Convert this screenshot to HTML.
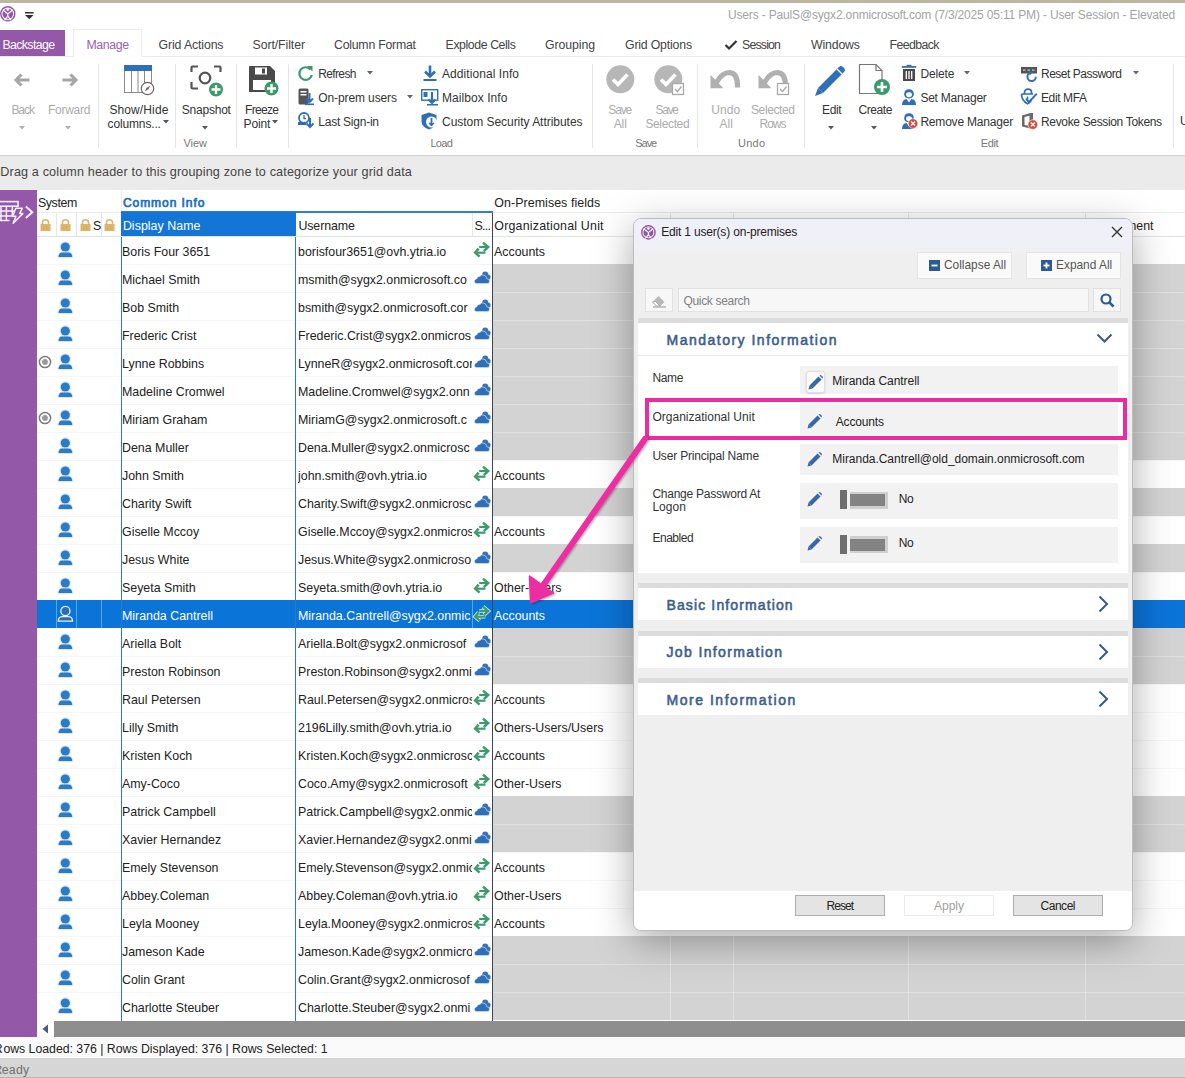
<!DOCTYPE html><html><head><meta charset="utf-8"><style>
html,body{margin:0;padding:0;width:1185px;height:1078px;overflow:hidden;background:#fff;position:relative}
.t{position:absolute;white-space:nowrap;font-family:"Liberation Sans",sans-serif}
.b{position:absolute;display:block}
svg.b{overflow:visible}
</style></head><body>
<div class="b" style="left:0px;top:0px;width:1185px;height:2.5px;background:#bdb7a1"></div>
<div class="b" style="left:0px;top:3px;width:1185px;height:27px;background:#fff"></div>
<svg class="b" style="left:0px;top:6px" width="16.0" height="16.0" viewBox="0 0 16 16"><circle cx="7.8" cy="7.8" r="7" fill="#fff" stroke="#9458a8" stroke-width="1.5"/><circle cx="7.8" cy="7.8" r="5.3" fill="#9458a8"/><path d="M2.8 3.8 L7.8 8 L12.8 3.8 M7.8 8 V10 L4.6 14.2 M7.8 10 L11 14.2" stroke="#fff" stroke-width="1.2" fill="none"/><circle cx="7.8" cy="3.6" r="1.3" fill="#fff"/></svg>
<svg class="b" style="left:25px;top:12px" width="9" height="8" viewBox="0 0 9 8"><rect x="0" y="0" width="8.6" height="1.5" fill="#333"/><path d="M0 3 L8.6 3 L4.3 7.2 Z" fill="#333"/></svg>
<div class="t" style="left:728.00px;top:7.0px;font-size:12.0px;line-height:16px;color:#a3a3a3;font-weight:normal;letter-spacing:-0.163px;">Users - PaulS@sygx2.onmicrosoft.com (7/3/2025 05:11 PM) - User Session - Elevated</div>
<div class="b" style="left:0px;top:30px;width:1185px;height:27px;background:#fff"></div>
<div class="b" style="left:0px;top:56px;width:1185px;height:1px;background:#ececec"></div>
<div class="b" style="left:0px;top:30px;width:65px;height:26px;background:#9458a8"></div>
<div class="t" style="left:2.50px;top:37.0px;font-size:12.3px;line-height:16px;color:#fff;font-weight:normal;letter-spacing:-0.618px;">Backstage</div>
<div class="b" style="left:73px;top:29px;width:69px;height:28px;background:#fff;border:1px solid #ececec;border-bottom:none;box-sizing:border-box"></div>
<div class="t" style="left:86.40px;top:37.0px;font-size:12.3px;line-height:16px;color:#9b62b0;font-weight:normal;letter-spacing:-0.341px;">Manage</div>
<div class="t" style="left:158.60px;top:37.0px;font-size:12.3px;line-height:16px;color:#444;font-weight:normal;letter-spacing:-0.127px;">Grid Actions</div>
<div class="t" style="left:252.50px;top:37.0px;font-size:12.3px;line-height:16px;color:#444;font-weight:normal;letter-spacing:-0.076px;">Sort/Filter</div>
<div class="t" style="left:334.00px;top:37.0px;font-size:12.3px;line-height:16px;color:#444;font-weight:normal;letter-spacing:-0.229px;">Column Format</div>
<div class="t" style="left:445.60px;top:37.0px;font-size:12.3px;line-height:16px;color:#444;font-weight:normal;letter-spacing:-0.413px;">Explode Cells</div>
<div class="t" style="left:545.00px;top:37.0px;font-size:12.3px;line-height:16px;color:#444;font-weight:normal;letter-spacing:-0.079px;">Grouping</div>
<div class="t" style="left:625.00px;top:37.0px;font-size:12.3px;line-height:16px;color:#444;font-weight:normal;letter-spacing:-0.182px;">Grid Options</div>
<div class="t" style="left:742.00px;top:37.0px;font-size:12.3px;line-height:16px;color:#444;font-weight:normal;letter-spacing:-0.798px;">Session</div>
<div class="t" style="left:811.00px;top:37.0px;font-size:12.3px;line-height:16px;color:#444;font-weight:normal;letter-spacing:-0.156px;">Windows</div>
<div class="t" style="left:889.60px;top:37.0px;font-size:12.3px;line-height:16px;color:#444;font-weight:normal;letter-spacing:-0.589px;">Feedback</div>
<svg class="b" style="left:724px;top:39px" width="14" height="12" viewBox="0 0 14 12"><path d="M1.5 6 L5 9.5 L12.5 2" stroke="#333" stroke-width="2.2" fill="none"/></svg>
<div class="b" style="left:0px;top:57px;width:1185px;height:98px;background:#fff"></div>
<div class="b" style="left:0px;top:155px;width:1185px;height:1px;background:#d2d2d2"></div>
<div class="b" style="left:98px;top:64px;width:1px;height:84px;background:#e6e6e6"></div>
<div class="b" style="left:175px;top:64px;width:1px;height:84px;background:#e6e6e6"></div>
<div class="b" style="left:236px;top:64px;width:1px;height:84px;background:#e6e6e6"></div>
<div class="b" style="left:288px;top:64px;width:1px;height:84px;background:#e6e6e6"></div>
<div class="b" style="left:592px;top:64px;width:1px;height:84px;background:#e6e6e6"></div>
<div class="b" style="left:697px;top:64px;width:1px;height:84px;background:#e6e6e6"></div>
<div class="b" style="left:804px;top:64px;width:1px;height:84px;background:#e6e6e6"></div>
<div class="b" style="left:1173px;top:64px;width:1px;height:84px;background:#e6e6e6"></div>
<svg class="b" style="left:13px;top:73px" width="18" height="14" viewBox="0 0 18 14"><path d="M16.5 7 L3 7 M8.5 1.5 L3 7 L8.5 12.5" stroke="#a6a6a6" stroke-width="3" fill="none" stroke-linejoin="miter"/></svg>
<svg class="b" style="left:61px;top:73px" width="18" height="14" viewBox="0 0 18 14"><path d="M1.5 7 L15 7 M9.5 1.5 L15 7 L9.5 12.5" stroke="#a6a6a6" stroke-width="3" fill="none"/></svg>
<div class="t" style="left:11.40px;top:102.0px;font-size:12.0px;line-height:16px;color:#ababab;font-weight:normal;letter-spacing:-1.053px;">Back</div>
<div class="t" style="left:48.00px;top:102.0px;font-size:12.0px;line-height:16px;color:#ababab;font-weight:normal;letter-spacing:-0.273px;">Forward</div>
<svg class="b" style="left:19px;top:126px" width="6" height="4" viewBox="0 0 6 4"><path d="M0 0 L6 0 L3 3.5 Z" fill="#b0b0b0"/></svg>
<svg class="b" style="left:65px;top:126px" width="6" height="4" viewBox="0 0 6 4"><path d="M0 0 L6 0 L3 3.5 Z" fill="#b0b0b0"/></svg>
<svg class="b" style="left:124px;top:65px" width="31" height="30" viewBox="0 0 31 30"><rect x="0.5" y="0.5" width="27" height="27" fill="#fff" stroke="#8a8a8a"/><rect x="0" y="0" width="28" height="6" fill="#2f6fba"/><path d="M7.5 6 V28 M14 6 V28 M20.5 6 V28" stroke="#8a8a8a"/><circle cx="23.5" cy="23.5" r="6.2" fill="#fff" stroke="#666" stroke-width="1.2"/><path d="M21 26 L23 22.5 L26.5 20.5 L24.5 24 Z" fill="#e0502a"/><path d="M21 26 L24.5 24 L23 22.5Z" fill="#2f6fba"/></svg>
<div class="t" style="left:109.40px;top:102.0px;font-size:12.0px;line-height:16px;color:#333;font-weight:normal;letter-spacing:0.115px;">Show/Hide</div>
<div class="t" style="left:107.60px;top:116.0px;font-size:12.0px;line-height:16px;color:#333;font-weight:normal;letter-spacing:-0.147px;">columns...</div>
<svg class="b" style="left:163px;top:120px" width="6" height="4" viewBox="0 0 6 4"><path d="M0 0 L6 0 L3 3.5 Z" fill="#555"/></svg>
<svg class="b" style="left:190px;top:65px" width="33" height="32" viewBox="0 0 33 32"><path d="M1.5 7 V2.5 Q1.5 1.5 2.5 1.5 H8 M24 1.5 H29.5 Q30.5 1.5 30.5 2.5 V7 M1.5 17 V22.5 Q1.5 23.5 2.5 23.5 H8" stroke="#555" stroke-width="2.2" fill="none"/><circle cx="15" cy="13" r="5.3" fill="none" stroke="#555" stroke-width="2.2"/><circle cx="26" cy="24.5" r="7" fill="#3b9a6c"/><path d="M26 20 V29 M21.5 24.5 H30.5" stroke="#fff" stroke-width="2.4"/></svg>
<div class="t" style="left:181.80px;top:102.0px;font-size:12.0px;line-height:16px;color:#333;font-weight:normal;letter-spacing:-0.223px;">Snapshot</div>
<svg class="b" style="left:202px;top:126px" width="6" height="4" viewBox="0 0 6 4"><path d="M0 0 L6 0 L3 3.5 Z" fill="#555"/></svg>
<svg class="b" style="left:248px;top:65px" width="32" height="31" viewBox="0 0 32 31"><path d="M1 2 Q1 1 2 1 H22 L27 6 V27 H1 Z" fill="#4a4a4a"/><rect x="7" y="2.5" width="12" height="7" fill="#fff"/><rect x="14" y="3.5" width="3" height="5" fill="#4a4a4a"/><rect x="5" y="15" width="18" height="10" fill="#fff"/><circle cx="23.5" cy="23.5" r="7" fill="#3b9a6c"/><path d="M23.5 19 V28 M19 23.5 H28" stroke="#fff" stroke-width="2.4"/></svg>
<div class="t" style="left:245.00px;top:102.0px;font-size:12.0px;line-height:16px;color:#333;font-weight:normal;letter-spacing:-0.664px;">Freeze</div>
<div class="t" style="left:243.50px;top:116.0px;font-size:12.0px;line-height:16px;color:#333;font-weight:normal;letter-spacing:-0.115px;">Point</div>
<svg class="b" style="left:272px;top:120px" width="6" height="4" viewBox="0 0 6 4"><path d="M0 0 L6 0 L3 3.5 Z" fill="#555"/></svg>
<div class="t" style="left:183.50px;top:135.5px;font-size:11.0px;line-height:14px;color:#777;font-weight:normal;letter-spacing:-0.087px;">View</div>
<svg class="b" style="left:297px;top:65px" width="17" height="17" viewBox="0 0 17 17"><path d="M13.5 4.5 A6.3 6.3 0 1 0 14.8 10" stroke="#3b9a6c" stroke-width="2.2" fill="none"/><path d="M10 1 L15.5 1 L15.5 6.5 Z" fill="#3b9a6c"/></svg>
<div class="t" style="left:318.30px;top:66.0px;font-size:12.0px;line-height:16px;color:#333;font-weight:normal;letter-spacing:-0.650px;">Refresh</div>
<svg class="b" style="left:367px;top:71px" width="6" height="4" viewBox="0 0 6 4"><path d="M0 0 L6 0 L3 3.5 Z" fill="#666"/></svg>
<svg class="b" style="left:298px;top:88px" width="17" height="18" viewBox="0 0 17 18"><rect x="0.5" y="0.5" width="10" height="16" rx="1.5" fill="#555"/><rect x="2.5" y="3" width="6" height="1.5" fill="#fff"/><rect x="2.5" y="6" width="6" height="1.5" fill="#fff"/><path d="M11.5 5 V14 M8 10.5 L11.5 14 L15 10.5" stroke="#2f6fba" stroke-width="2" fill="none"/><rect x="7" y="15.5" width="9" height="1.6" fill="#2f6fba"/></svg>
<div class="t" style="left:318.30px;top:90.0px;font-size:12.0px;line-height:16px;color:#333;font-weight:normal;letter-spacing:-0.112px;">On-prem users</div>
<svg class="b" style="left:407px;top:95px" width="6" height="4" viewBox="0 0 6 4"><path d="M0 0 L6 0 L3 3.5 Z" fill="#666"/></svg>
<svg class="b" style="left:298px;top:112px" width="17" height="17" viewBox="0 0 17 17"><circle cx="6" cy="6" r="5" fill="#fff" stroke="#2f6fba" stroke-width="1.8"/><path d="M6 3 V6.5 H8" stroke="#2f6fba" stroke-width="1.3" fill="none"/><rect x="0" y="10" width="8" height="3" fill="#2f6fba"/><path d="M12 6 V15 M8.5 11.5 L12 15 L15.5 11.5" stroke="#2f6fba" stroke-width="2" fill="none"/></svg>
<div class="t" style="left:318.30px;top:113.5px;font-size:12.0px;line-height:16px;color:#333;font-weight:normal;letter-spacing:-0.242px;">Last Sign-in</div>
<svg class="b" style="left:422px;top:65px" width="16" height="17" viewBox="0 0 16 17"><path d="M8 0.5 V11 M3 6.5 L8 11.5 L13 6.5" stroke="#2f6fba" stroke-width="2.6" fill="none"/><rect x="1.5" y="14" width="13" height="2" fill="#2f6fba"/></svg>
<div class="t" style="left:442.00px;top:66.0px;font-size:12.0px;line-height:16px;color:#333;font-weight:normal;letter-spacing:0.066px;">Additional Info</div>
<svg class="b" style="left:421px;top:89px" width="18" height="17" viewBox="0 0 18 17"><rect x="0.7" y="0.7" width="16" height="10.5" fill="none" stroke="#2f6fba" stroke-width="1.4"/><rect x="2.5" y="3" width="4" height="5" fill="#2f6fba"/><path d="M11 3 V14 M7.5 10.5 L11 14 L14.5 10.5" stroke="#2f6fba" stroke-width="2.2" fill="none"/><rect x="6" y="15" width="11" height="1.5" fill="#2f6fba"/></svg>
<div class="t" style="left:442.00px;top:90.0px;font-size:12.0px;line-height:16px;color:#333;font-weight:normal;letter-spacing:0.065px;">Mailbox Info</div>
<svg class="b" style="left:421px;top:112px" width="18" height="18" viewBox="0 0 18 18"><path d="M8 0.5 L15.5 3 V9 Q15.5 15 8 17.5 Q0.5 15 0.5 9 V3 Z" fill="#2f6fba"/><circle cx="10.5" cy="10" r="5.5" fill="#fff"/><path d="M10.5 6 V13 M8.3 11 L10.5 13.3 L12.7 11" stroke="#2f6fba" stroke-width="1.8" fill="none"/></svg>
<div class="t" style="left:442.00px;top:113.5px;font-size:12.0px;line-height:16px;color:#333;font-weight:normal;letter-spacing:-0.034px;">Custom Security Attributes</div>
<div class="t" style="left:430.40px;top:135.5px;font-size:11.0px;line-height:14px;color:#777;font-weight:normal;letter-spacing:-0.673px;">Load</div>
<svg class="b" style="left:606px;top:65px" width="29" height="29" viewBox="0 0 29 29"><circle cx="14.3" cy="14.3" r="14" fill="#b7b7b7"/><path d="M7 14.5 L12 19.5 L21.5 9.5" stroke="#fff" stroke-width="3.6" fill="none"/></svg>
<div class="t" style="left:608.30px;top:102.0px;font-size:12.0px;line-height:16px;color:#ababab;font-weight:normal;letter-spacing:-1.153px;">Save</div>
<div class="t" style="left:613.70px;top:116.0px;font-size:12.0px;line-height:16px;color:#ababab;font-weight:normal;letter-spacing:-0.110px;">All</div>
<svg class="b" style="left:654px;top:65px" width="31" height="31" viewBox="0 0 31 31"><circle cx="14.3" cy="14.3" r="14" fill="#b7b7b7"/><path d="M7 14.5 L12 19.5 L21.5 9.5" stroke="#fff" stroke-width="3.6" fill="none"/><rect x="18.5" y="18.5" width="11" height="11" fill="#fff" stroke="#a8a8a8" stroke-width="1.3"/><path d="M21 24 L23.5 26.5 L27.5 21.5" stroke="#a8a8a8" stroke-width="1.3" fill="none"/></svg>
<div class="t" style="left:655.60px;top:102.0px;font-size:12.0px;line-height:16px;color:#ababab;font-weight:normal;letter-spacing:-1.320px;">Save</div>
<div class="t" style="left:645.40px;top:116.0px;font-size:12.0px;line-height:16px;color:#ababab;font-weight:normal;letter-spacing:-0.354px;">Selected</div>
<div class="t" style="left:635.30px;top:135.5px;font-size:11.0px;line-height:14px;color:#777;font-weight:normal;letter-spacing:-1.060px;">Save</div>
<svg class="b" style="left:709px;top:67px" width="33" height="25" viewBox="0 0 33 25"><path d="M7.5 15.5 Q13 5.5 20.5 5.5 Q29 6 28.5 20.5" stroke="#b0b0b0" stroke-width="5.2" fill="none"/><path d="M1.5 8 L1.5 21.2 L14.5 21.2 Z" fill="#b0b0b0"/></svg>
<div class="t" style="left:711.20px;top:102.0px;font-size:12.0px;line-height:16px;color:#ababab;font-weight:normal;letter-spacing:0.140px;">Undo</div>
<div class="t" style="left:719.50px;top:116.0px;font-size:12.0px;line-height:16px;color:#ababab;font-weight:normal;letter-spacing:0.090px;">All</div>
<svg class="b" style="left:757px;top:67px" width="35" height="29" viewBox="0 0 35 29"><path d="M7.5 15.5 Q13 5.5 20.5 5.5 Q29 6 28.5 20.5" stroke="#b0b0b0" stroke-width="5.2" fill="none"/><path d="M1.5 8 L1.5 21.2 L14.5 21.2 Z" fill="#b0b0b0"/><rect x="20.5" y="16.5" width="11" height="11" fill="#fff" stroke="#a8a8a8" stroke-width="1.3"/><path d="M23 22 L25.5 24.5 L29.5 19.5" stroke="#a8a8a8" stroke-width="1.3" fill="none"/></svg>
<div class="t" style="left:751.00px;top:102.0px;font-size:12.0px;line-height:16px;color:#ababab;font-weight:normal;letter-spacing:-0.383px;">Selected</div>
<div class="t" style="left:759.50px;top:116.0px;font-size:12.0px;line-height:16px;color:#ababab;font-weight:normal;letter-spacing:-1.000px;">Rows</div>
<div class="t" style="left:738.00px;top:135.5px;font-size:11.0px;line-height:14px;color:#777;font-weight:normal;letter-spacing:0.237px;">Undo</div>
<svg class="b" style="left:814px;top:63px" width="34" height="34" viewBox="0 0 34 34"><path d="M4 25 L25 4 Q27 2 29 4 L30 5 Q32 7 30 9 L9 30 Z" fill="#2f6fba"/><path d="M4 25 L9 30 L1 33 Z" fill="#2f6fba"/><path d="M23 6 L28 11" stroke="#fff" stroke-width="1.2"/></svg>
<div class="t" style="left:822.00px;top:102.0px;font-size:12.0px;line-height:16px;color:#333;font-weight:normal;letter-spacing:-0.353px;">Edit</div>
<svg class="b" style="left:828px;top:126px" width="6" height="4" viewBox="0 0 6 4"><path d="M0 0 L6 0 L3 3.5 Z" fill="#555"/></svg>
<svg class="b" style="left:858px;top:63px" width="34" height="34" viewBox="0 0 34 34"><path d="M1.5 1.5 H18 L24 7.5 V30.5 H1.5 Z" fill="#fff" stroke="#777" stroke-width="1.2"/><path d="M18 1.5 V7.5 H24" fill="none" stroke="#777" stroke-width="1.2"/><circle cx="24" cy="24" r="8" fill="#3b9a6c"/><path d="M24 19 V29 M19 24 H29" stroke="#fff" stroke-width="2.6"/></svg>
<div class="t" style="left:858.60px;top:102.0px;font-size:12.0px;line-height:16px;color:#333;font-weight:normal;letter-spacing:-0.460px;">Create</div>
<svg class="b" style="left:871px;top:126px" width="6" height="4" viewBox="0 0 6 4"><path d="M0 0 L6 0 L3 3.5 Z" fill="#555"/></svg>
<svg class="b" style="left:901px;top:64px" width="16" height="18" viewBox="0 0 16 18"><rect x="0.8" y="2" width="14.4" height="1.8" fill="#3f6fae"/><rect x="5.5" y="0.8" width="5" height="1.5" fill="#3f6fae"/><rect x="2" y="5" width="12" height="12" fill="#4a4a4a"/><path d="M5.3 7 V15 M8 7 V15 M10.7 7 V15" stroke="#fff" stroke-width="1.3"/></svg>
<div class="t" style="left:920.40px;top:66.0px;font-size:12.0px;line-height:16px;color:#333;font-weight:normal;letter-spacing:-0.116px;">Delete</div>
<svg class="b" style="left:964px;top:71px" width="6" height="4" viewBox="0 0 6 4"><path d="M0 0 L6 0 L3 3.5 Z" fill="#666"/></svg>
<svg class="b" style="left:901px;top:88px" width="17" height="18" viewBox="0 0 17 18"><path d="M3.2 6.2 Q3.2 1.2 8 1.2 Q12.8 1.2 12.8 6.2 Q12.8 10.2 8 10.4 Q3.2 10.2 3.2 6.2 Z" fill="#2f6fba"/><path d="M5 6.6 Q5 4 8 4.3 Q11 4 11 6.6 Q10.8 9.2 8 9.3 Q5.2 9.2 5 6.6 Z" fill="#fff"/><path d="M1 17 Q1 11.5 5.5 11 L8 14.5 L10.5 11 Q15 11.5 15 17 Z" fill="#2f6fba"/><path d="M7 11.2 L8 14 L9 11.2 Z" fill="#cfe2f6"/></svg>
<div class="t" style="left:920.40px;top:90.0px;font-size:12.0px;line-height:16px;color:#333;font-weight:normal;letter-spacing:-0.226px;">Set Manager</div>
<svg class="b" style="left:901px;top:112px" width="19" height="18" viewBox="0 0 19 18"><path d="M3.2 6.2 Q3.2 1.2 8 1.2 Q12.8 1.2 12.8 6.2 Q12.8 10.2 8 10.4 Q3.2 10.2 3.2 6.2 Z" fill="#2f6fba"/><path d="M5 6.6 Q5 4 8 4.3 Q11 4 11 6.6 Q10.8 9.2 8 9.3 Q5.2 9.2 5 6.6 Z" fill="#fff"/><path d="M1 17 Q1 11.5 5.5 11 L8 14.5 L10.5 11 Q13 11.3 14 13 L12 17 Z" fill="#2f6fba"/><circle cx="12" cy="11.6" r="4.8" fill="#d9443a" stroke="#fff" stroke-width="0.6"/><path d="M10 9.6 L14 13.6 M14 9.6 L10 13.6" stroke="#fff" stroke-width="1.4"/></svg>
<div class="t" style="left:920.40px;top:113.5px;font-size:12.0px;line-height:16px;color:#333;font-weight:normal;letter-spacing:-0.200px;">Remove Manager</div>
<svg class="b" style="left:1020px;top:65px" width="18" height="18" viewBox="0 0 18 18"><rect x="1" y="2" width="16" height="6.5" fill="#555"/><path d="M3 5.2 H5.5 M7.5 5.2 H10 M12 5.2 H14.5" stroke="#c8c8c8" stroke-width="1.2"/><path d="M15.8 11.8 A4.2 4.2 0 1 1 11.6 7.6" stroke="#2f6fba" stroke-width="2" fill="none"/><path d="M8.6 6 L12.6 7.6 L9.6 10.4 Z" fill="#2f6fba"/></svg>
<div class="t" style="left:1041.00px;top:66.0px;font-size:12.0px;line-height:16px;color:#333;font-weight:normal;letter-spacing:-0.497px;">Reset Password</div>
<svg class="b" style="left:1133px;top:71px" width="6" height="4" viewBox="0 0 6 4"><path d="M0 0 L6 0 L3 3.5 Z" fill="#666"/></svg>
<svg class="b" style="left:1020px;top:88px" width="18" height="17" viewBox="0 0 18 17"><path d="M4.5 6 V4.5 Q4.5 1.2 8 1.2 Q11.5 1.2 11.5 4.5 V6" stroke="#2f6fba" stroke-width="1.7" fill="none"/><path d="M1.5 6 H13 M1.5 6 Q1.5 12.5 7.5 15.8 Q10 14.5 11.5 12" stroke="#2f6fba" stroke-width="1.7" fill="none"/><rect x="6.8" y="8.5" width="1.5" height="3" fill="#2f6fba"/><path d="M6 10.5 L8.8 14.2 L16.8 5.6" stroke="#2f6fba" stroke-width="2" fill="none"/></svg>
<div class="t" style="left:1041.00px;top:90.0px;font-size:12.0px;line-height:16px;color:#333;font-weight:normal;letter-spacing:-0.389px;">Edit MFA</div>
<svg class="b" style="left:1020px;top:112px" width="19" height="18" viewBox="0 0 19 18"><path d="M2 3.5 L10.5 1 H13 V14 L10.5 16.5 L2 14.5 Z" fill="#6a6a6a"/><path d="M4.5 5 L9.5 3.8 V13.8 L4.5 13 Z" fill="#fff"/><circle cx="12.8" cy="12.6" r="4.8" fill="#d9443a" stroke="#fff" stroke-width="0.6"/><path d="M10.8 10.6 L14.8 14.6 M14.8 10.6 L10.8 14.6" stroke="#fff" stroke-width="1.4"/></svg>
<div class="t" style="left:1041.00px;top:113.5px;font-size:12.0px;line-height:16px;color:#333;font-weight:normal;letter-spacing:-0.340px;">Revoke Session Tokens</div>
<div class="t" style="left:980.80px;top:135.5px;font-size:11.0px;line-height:14px;color:#777;font-weight:normal;letter-spacing:-0.377px;">Edit</div>
<div class="t" style="left:1180px;top:113.0px;font-size:12.0px;line-height:16px;color:#333;font-weight:normal;">U</div>
<div class="b" style="left:0px;top:156px;width:1185px;height:34px;background:#ebebeb"></div>
<div class="t" style="left:0.30px;top:163.5px;font-size:12.6px;line-height:16px;color:#444;font-weight:normal;letter-spacing:0.148px;">Drag a column header to this grouping zone to categorize your grid data</div>
<div class="b" style="left:0px;top:190px;width:37px;height:847px;background:#9458a8"></div>
<svg class="b" style="left:0px;top:200px" width="36" height="25" viewBox="0 0 36 25"><g stroke="#fbefff" fill="none"><rect x="-1" y="1.6" width="19" height="4.6" stroke-width="1.6"/><path d="M0 11 H14 M0 16 H12 M0 20.6 H9.5" stroke-width="1.5"/><path d="M1 6 V20 M6.4 6 V20 M12.3 6 V16" stroke-width="1.5"/></g><path d="M15.8 8.2 H22.3 L19.6 13.6 H22.8 L13.2 23.2 L15.9 16.3 H12.6 Z" fill="#9458a8" stroke="#fbefff" stroke-width="1.5" stroke-linejoin="round"/><path d="M25.8 6.5 L32.3 12.2 L25.8 17.9" stroke="#fbefff" stroke-width="2" fill="none"/></svg>
<div class="b" style="left:37px;top:190px;width:1148px;height:831px;background:#fff"></div>
<div class="t" style="left:38.00px;top:194.6px;font-size:12.4px;line-height:16px;color:#222;font-weight:normal;letter-spacing:-0.418px;">System</div>
<div class="t" style="left:122.90px;top:195.0px;font-size:12.0px;line-height:16px;color:#1a70c2;font-weight:normal;letter-spacing:0.950px;-webkit-text-stroke:0.7px #1a70c2">Common Info</div>
<div class="b" style="left:37px;top:212px;width:1148px;height:1px;background:#ececec"></div>
<div class="b" style="left:121px;top:190px;width:1px;height:22px;background:#eeeeee"></div>
<div class="b" style="left:121px;top:211px;width:372px;height:2px;background:#2b80cf"></div>
<div class="t" style="left:494.30px;top:194.8px;font-size:12.4px;line-height:16px;color:#222;font-weight:normal;letter-spacing:0.072px;">On-Premises fields</div>
<div class="b" style="left:37px;top:236px;width:1148px;height:1px;background:#e3e3e3"></div>
<div class="b" style="left:56px;top:213px;width:1px;height:23px;background:#e6e6e6"></div>
<div class="b" style="left:76px;top:213px;width:1px;height:23px;background:#e6e6e6"></div>
<div class="b" style="left:101px;top:213px;width:1px;height:23px;background:#e6e6e6"></div>
<svg class="b" style="left:40px;top:219px" width="11" height="12" viewBox="0 0 11 12"><path d="M2.5 5 V3.5 Q2.5 0.8 5.5 0.8 Q8.5 0.8 8.5 3.5 V5" stroke="#dcb56a" stroke-width="1.6" fill="none"/><rect x="0.5" y="5" width="10" height="7" fill="#dcb56a"/><path d="M3 8 H4 M6 8 H7 M3 10 H4 M6 10 H7" stroke="#c99c4e" stroke-width="0.8"/></svg>
<svg class="b" style="left:60px;top:219px" width="11" height="12" viewBox="0 0 11 12"><path d="M2.5 5 V3.5 Q2.5 0.8 5.5 0.8 Q8.5 0.8 8.5 3.5 V5" stroke="#dcb56a" stroke-width="1.6" fill="none"/><rect x="0.5" y="5" width="10" height="7" fill="#dcb56a"/><path d="M3 8 H4 M6 8 H7 M3 10 H4 M6 10 H7" stroke="#c99c4e" stroke-width="0.8"/></svg>
<svg class="b" style="left:80px;top:219px" width="11" height="12" viewBox="0 0 11 12"><path d="M2.5 5 V3.5 Q2.5 0.8 5.5 0.8 Q8.5 0.8 8.5 3.5 V5" stroke="#dcb56a" stroke-width="1.6" fill="none"/><rect x="0.5" y="5" width="10" height="7" fill="#dcb56a"/><path d="M3 8 H4 M6 8 H7 M3 10 H4 M6 10 H7" stroke="#c99c4e" stroke-width="0.8"/></svg>
<svg class="b" style="left:104px;top:219px" width="11" height="12" viewBox="0 0 11 12"><path d="M2.5 5 V3.5 Q2.5 0.8 5.5 0.8 Q8.5 0.8 8.5 3.5 V5" stroke="#dcb56a" stroke-width="1.6" fill="none"/><rect x="0.5" y="5" width="10" height="7" fill="#dcb56a"/><path d="M3 8 H4 M6 8 H7 M3 10 H4 M6 10 H7" stroke="#c99c4e" stroke-width="0.8"/></svg>
<div class="t" style="left:93px;top:218.0px;font-size:12.4px;line-height:16px;color:#222;font-weight:normal;">S</div>
<div class="b" style="left:121px;top:212px;width:175px;height:24px;background:#1375d5"></div>
<div class="t" style="left:122.90px;top:218.2px;font-size:12.4px;line-height:16px;color:#fff;font-weight:normal;letter-spacing:0.034px;">Display Name</div>
<div class="t" style="left:298.40px;top:218.2px;font-size:12.4px;line-height:16px;color:#222;font-weight:normal;letter-spacing:-0.081px;">Username</div>
<div class="b" style="left:472px;top:213px;width:1px;height:23px;background:#e6e6e6"></div>
<div class="t" style="left:474.50px;top:218.2px;font-size:12.4px;line-height:16px;color:#222;font-weight:normal;letter-spacing:-0.700px;">S...</div>
<div class="b" style="left:492px;top:213px;width:1px;height:23px;background:#e6e6e6"></div>
<div class="t" style="left:494.30px;top:218.2px;font-size:12.4px;line-height:16px;color:#222;font-weight:normal;letter-spacing:0.215px;">Organizational Unit</div>
<div class="b" style="left:670px;top:213px;width:1px;height:23px;background:#e6e6e6"></div>
<div class="b" style="left:733px;top:213px;width:1px;height:23px;background:#e6e6e6"></div>
<div class="b" style="left:908px;top:213px;width:1px;height:23px;background:#e6e6e6"></div>
<div class="b" style="left:1085px;top:213px;width:1px;height:23px;background:#e6e6e6"></div>
<div class="t" style="left:1126px;top:218.2px;font-size:12.4px;line-height:16px;color:#222;font-weight:normal;">ment</div>
<svg class="b" style="left:57px;top:240px" width="17" height="18" viewBox="0 0 17 18"><circle cx="8.3" cy="7.1" r="5.4" fill="#e6f0f9" stroke="#c9d6e2" stroke-width="0.5"/><circle cx="8.3" cy="7" r="4.6" fill="#2b7bc6"/><path d="M0.8 17.5 Q0.8 12.6 4.5 12.2 H12.2 Q15.9 12.6 15.9 17.5 Z" fill="#e6f0f9" stroke="#c9d6e2" stroke-width="0.5"/><path d="M1.6 16.9 Q1.6 12.6 5 12.4 H11.6 Q15.1 12.6 15.2 16.9 Z" fill="#2b7bc6"/></svg>
<div class="t" style="left:122px;top:243.8px;font-size:12.4px;line-height:16px;color:#222;font-weight:normal;">Boris Four 3651</div>
<div class="t" style="left:298px;top:243.8px;width:174px;overflow:hidden;font-size:12.4px;line-height:16px;color:#222">borisfour3651@ovh.ytria.io</div>
<svg class="b" style="left:474px;top:241px" width="17" height="17" viewBox="0 0 17 17"><path d="M5.2 6 H13.5" stroke="#3e9a6f" stroke-width="2.2" fill="none"/><path d="M9 1.8 L14.2 6 L9.8 10.2" stroke="#3e9a6f" stroke-width="2.5" fill="none"/><path d="M11.4 11.7 H2.2" stroke="#3e9a6f" stroke-width="2.2" fill="none"/><path d="M4.6 7.6 L1.2 11.6 L5.6 15.6" stroke="#3e9a6f" stroke-width="2.5" fill="none"/></svg>
<div class="t" style="left:494px;top:243.8px;font-size:12.4px;line-height:16px;color:#222;font-weight:normal;">Accounts</div>
<div class="b" style="left:493px;top:264px;width:692px;height:28px;background:#d3d3d3"></div>
<div class="b" style="left:37px;top:264px;width:456px;height:1px;background:#f5f5f5"></div>
<svg class="b" style="left:57px;top:268px" width="17" height="18" viewBox="0 0 17 18"><circle cx="8.3" cy="7.1" r="5.4" fill="#e6f0f9" stroke="#c9d6e2" stroke-width="0.5"/><circle cx="8.3" cy="7" r="4.6" fill="#2b7bc6"/><path d="M0.8 17.5 Q0.8 12.6 4.5 12.2 H12.2 Q15.9 12.6 15.9 17.5 Z" fill="#e6f0f9" stroke="#c9d6e2" stroke-width="0.5"/><path d="M1.6 16.9 Q1.6 12.6 5 12.4 H11.6 Q15.1 12.6 15.2 16.9 Z" fill="#2b7bc6"/></svg>
<div class="t" style="left:122px;top:271.8px;font-size:12.4px;line-height:16px;color:#222;font-weight:normal;">Michael Smith</div>
<div class="t" style="left:298px;top:271.8px;width:174px;overflow:hidden;font-size:12.4px;line-height:16px;color:#222">msmith@sygx2.onmicrosoft.co</div>
<svg class="b" style="left:474px;top:271px" width="17" height="14" viewBox="0 0 17 14"><g fill="#3a72b8"><circle cx="11.2" cy="3.6" r="3"/><circle cx="14" cy="6" r="2.6"/><rect x="9" y="4" width="6.5" height="5" rx="2"/></g><g fill="#2f6fba" stroke="#cfe0f2" stroke-width="0.7"><path d="M2.5 12.6 Q0.2 12.6 0.4 10.2 Q0.6 8 2.8 7.8 Q3.4 5.2 6.2 5.2 Q7.6 3.2 10 4.2 Q12.6 5 12.6 7.6 Q15.6 7.8 15.6 10.4 Q15.4 12.6 13 12.6 Z"/></g></svg>
<div class="b" style="left:493px;top:292px;width:692px;height:28px;background:#d3d3d3"></div>
<div class="b" style="left:493px;top:292px;width:692px;height:1px;background:#e0e0e0"></div>
<div class="b" style="left:37px;top:292px;width:456px;height:1px;background:#f5f5f5"></div>
<svg class="b" style="left:57px;top:296px" width="17" height="18" viewBox="0 0 17 18"><circle cx="8.3" cy="7.1" r="5.4" fill="#e6f0f9" stroke="#c9d6e2" stroke-width="0.5"/><circle cx="8.3" cy="7" r="4.6" fill="#2b7bc6"/><path d="M0.8 17.5 Q0.8 12.6 4.5 12.2 H12.2 Q15.9 12.6 15.9 17.5 Z" fill="#e6f0f9" stroke="#c9d6e2" stroke-width="0.5"/><path d="M1.6 16.9 Q1.6 12.6 5 12.4 H11.6 Q15.1 12.6 15.2 16.9 Z" fill="#2b7bc6"/></svg>
<div class="t" style="left:122px;top:299.8px;font-size:12.4px;line-height:16px;color:#222;font-weight:normal;">Bob Smith</div>
<div class="t" style="left:298px;top:299.8px;width:174px;overflow:hidden;font-size:12.4px;line-height:16px;color:#222">bsmith@sygx2.onmicrosoft.cor</div>
<svg class="b" style="left:474px;top:299px" width="17" height="14" viewBox="0 0 17 14"><g fill="#3a72b8"><circle cx="11.2" cy="3.6" r="3"/><circle cx="14" cy="6" r="2.6"/><rect x="9" y="4" width="6.5" height="5" rx="2"/></g><g fill="#2f6fba" stroke="#cfe0f2" stroke-width="0.7"><path d="M2.5 12.6 Q0.2 12.6 0.4 10.2 Q0.6 8 2.8 7.8 Q3.4 5.2 6.2 5.2 Q7.6 3.2 10 4.2 Q12.6 5 12.6 7.6 Q15.6 7.8 15.6 10.4 Q15.4 12.6 13 12.6 Z"/></g></svg>
<div class="b" style="left:493px;top:320px;width:692px;height:28px;background:#d3d3d3"></div>
<div class="b" style="left:493px;top:320px;width:692px;height:1px;background:#e0e0e0"></div>
<div class="b" style="left:37px;top:320px;width:456px;height:1px;background:#f5f5f5"></div>
<svg class="b" style="left:57px;top:324px" width="17" height="18" viewBox="0 0 17 18"><circle cx="8.3" cy="7.1" r="5.4" fill="#e6f0f9" stroke="#c9d6e2" stroke-width="0.5"/><circle cx="8.3" cy="7" r="4.6" fill="#2b7bc6"/><path d="M0.8 17.5 Q0.8 12.6 4.5 12.2 H12.2 Q15.9 12.6 15.9 17.5 Z" fill="#e6f0f9" stroke="#c9d6e2" stroke-width="0.5"/><path d="M1.6 16.9 Q1.6 12.6 5 12.4 H11.6 Q15.1 12.6 15.2 16.9 Z" fill="#2b7bc6"/></svg>
<div class="t" style="left:122px;top:327.8px;font-size:12.4px;line-height:16px;color:#222;font-weight:normal;">Frederic Crist</div>
<div class="t" style="left:298px;top:327.8px;width:174px;overflow:hidden;font-size:12.4px;line-height:16px;color:#222">Frederic.Crist@sygx2.onmicros</div>
<svg class="b" style="left:474px;top:327px" width="17" height="14" viewBox="0 0 17 14"><g fill="#3a72b8"><circle cx="11.2" cy="3.6" r="3"/><circle cx="14" cy="6" r="2.6"/><rect x="9" y="4" width="6.5" height="5" rx="2"/></g><g fill="#2f6fba" stroke="#cfe0f2" stroke-width="0.7"><path d="M2.5 12.6 Q0.2 12.6 0.4 10.2 Q0.6 8 2.8 7.8 Q3.4 5.2 6.2 5.2 Q7.6 3.2 10 4.2 Q12.6 5 12.6 7.6 Q15.6 7.8 15.6 10.4 Q15.4 12.6 13 12.6 Z"/></g></svg>
<div class="b" style="left:493px;top:348px;width:692px;height:28px;background:#d3d3d3"></div>
<div class="b" style="left:493px;top:348px;width:692px;height:1px;background:#e0e0e0"></div>
<div class="b" style="left:37px;top:348px;width:456px;height:1px;background:#f5f5f5"></div>
<svg class="b" style="left:57px;top:352px" width="17" height="18" viewBox="0 0 17 18"><circle cx="8.3" cy="7.1" r="5.4" fill="#e6f0f9" stroke="#c9d6e2" stroke-width="0.5"/><circle cx="8.3" cy="7" r="4.6" fill="#2b7bc6"/><path d="M0.8 17.5 Q0.8 12.6 4.5 12.2 H12.2 Q15.9 12.6 15.9 17.5 Z" fill="#e6f0f9" stroke="#c9d6e2" stroke-width="0.5"/><path d="M1.6 16.9 Q1.6 12.6 5 12.4 H11.6 Q15.1 12.6 15.2 16.9 Z" fill="#2b7bc6"/></svg>
<svg class="b" style="left:38px;top:355.1px" width="14" height="14" viewBox="0 0 14 14"><circle cx="7" cy="7" r="5.6" fill="#fff" stroke="#7a7a7a" stroke-width="1.5"/><circle cx="7" cy="7" r="2.9" fill="#9a9a9a"/></svg>
<div class="t" style="left:122px;top:355.8px;font-size:12.4px;line-height:16px;color:#222;font-weight:normal;">Lynne Robbins</div>
<div class="t" style="left:298px;top:355.8px;width:174px;overflow:hidden;font-size:12.4px;line-height:16px;color:#222">LynneR@sygx2.onmicrosoft.cor</div>
<svg class="b" style="left:474px;top:355px" width="17" height="14" viewBox="0 0 17 14"><g fill="#3a72b8"><circle cx="11.2" cy="3.6" r="3"/><circle cx="14" cy="6" r="2.6"/><rect x="9" y="4" width="6.5" height="5" rx="2"/></g><g fill="#2f6fba" stroke="#cfe0f2" stroke-width="0.7"><path d="M2.5 12.6 Q0.2 12.6 0.4 10.2 Q0.6 8 2.8 7.8 Q3.4 5.2 6.2 5.2 Q7.6 3.2 10 4.2 Q12.6 5 12.6 7.6 Q15.6 7.8 15.6 10.4 Q15.4 12.6 13 12.6 Z"/></g></svg>
<div class="b" style="left:493px;top:376px;width:692px;height:28px;background:#d3d3d3"></div>
<div class="b" style="left:493px;top:376px;width:692px;height:1px;background:#e0e0e0"></div>
<div class="b" style="left:37px;top:376px;width:456px;height:1px;background:#f5f5f5"></div>
<svg class="b" style="left:57px;top:380px" width="17" height="18" viewBox="0 0 17 18"><circle cx="8.3" cy="7.1" r="5.4" fill="#e6f0f9" stroke="#c9d6e2" stroke-width="0.5"/><circle cx="8.3" cy="7" r="4.6" fill="#2b7bc6"/><path d="M0.8 17.5 Q0.8 12.6 4.5 12.2 H12.2 Q15.9 12.6 15.9 17.5 Z" fill="#e6f0f9" stroke="#c9d6e2" stroke-width="0.5"/><path d="M1.6 16.9 Q1.6 12.6 5 12.4 H11.6 Q15.1 12.6 15.2 16.9 Z" fill="#2b7bc6"/></svg>
<div class="t" style="left:122px;top:383.8px;font-size:12.4px;line-height:16px;color:#222;font-weight:normal;">Madeline Cromwel</div>
<div class="t" style="left:298px;top:383.8px;width:174px;overflow:hidden;font-size:12.4px;line-height:16px;color:#222">Madeline.Cromwel@sygx2.onn</div>
<svg class="b" style="left:474px;top:383px" width="17" height="14" viewBox="0 0 17 14"><g fill="#3a72b8"><circle cx="11.2" cy="3.6" r="3"/><circle cx="14" cy="6" r="2.6"/><rect x="9" y="4" width="6.5" height="5" rx="2"/></g><g fill="#2f6fba" stroke="#cfe0f2" stroke-width="0.7"><path d="M2.5 12.6 Q0.2 12.6 0.4 10.2 Q0.6 8 2.8 7.8 Q3.4 5.2 6.2 5.2 Q7.6 3.2 10 4.2 Q12.6 5 12.6 7.6 Q15.6 7.8 15.6 10.4 Q15.4 12.6 13 12.6 Z"/></g></svg>
<div class="b" style="left:493px;top:404px;width:692px;height:28px;background:#d3d3d3"></div>
<div class="b" style="left:493px;top:404px;width:692px;height:1px;background:#e0e0e0"></div>
<div class="b" style="left:37px;top:404px;width:456px;height:1px;background:#f5f5f5"></div>
<svg class="b" style="left:57px;top:408px" width="17" height="18" viewBox="0 0 17 18"><circle cx="8.3" cy="7.1" r="5.4" fill="#e6f0f9" stroke="#c9d6e2" stroke-width="0.5"/><circle cx="8.3" cy="7" r="4.6" fill="#2b7bc6"/><path d="M0.8 17.5 Q0.8 12.6 4.5 12.2 H12.2 Q15.9 12.6 15.9 17.5 Z" fill="#e6f0f9" stroke="#c9d6e2" stroke-width="0.5"/><path d="M1.6 16.9 Q1.6 12.6 5 12.4 H11.6 Q15.1 12.6 15.2 16.9 Z" fill="#2b7bc6"/></svg>
<svg class="b" style="left:38px;top:411.1px" width="14" height="14" viewBox="0 0 14 14"><circle cx="7" cy="7" r="5.6" fill="#fff" stroke="#7a7a7a" stroke-width="1.5"/><circle cx="7" cy="7" r="2.9" fill="#9a9a9a"/></svg>
<div class="t" style="left:122px;top:411.8px;font-size:12.4px;line-height:16px;color:#222;font-weight:normal;">Miriam Graham</div>
<div class="t" style="left:298px;top:411.8px;width:174px;overflow:hidden;font-size:12.4px;line-height:16px;color:#222">MiriamG@sygx2.onmicrosoft.c</div>
<svg class="b" style="left:474px;top:411px" width="17" height="14" viewBox="0 0 17 14"><g fill="#3a72b8"><circle cx="11.2" cy="3.6" r="3"/><circle cx="14" cy="6" r="2.6"/><rect x="9" y="4" width="6.5" height="5" rx="2"/></g><g fill="#2f6fba" stroke="#cfe0f2" stroke-width="0.7"><path d="M2.5 12.6 Q0.2 12.6 0.4 10.2 Q0.6 8 2.8 7.8 Q3.4 5.2 6.2 5.2 Q7.6 3.2 10 4.2 Q12.6 5 12.6 7.6 Q15.6 7.8 15.6 10.4 Q15.4 12.6 13 12.6 Z"/></g></svg>
<div class="b" style="left:493px;top:432px;width:692px;height:28px;background:#d3d3d3"></div>
<div class="b" style="left:493px;top:432px;width:692px;height:1px;background:#e0e0e0"></div>
<div class="b" style="left:37px;top:432px;width:456px;height:1px;background:#f5f5f5"></div>
<svg class="b" style="left:57px;top:436px" width="17" height="18" viewBox="0 0 17 18"><circle cx="8.3" cy="7.1" r="5.4" fill="#e6f0f9" stroke="#c9d6e2" stroke-width="0.5"/><circle cx="8.3" cy="7" r="4.6" fill="#2b7bc6"/><path d="M0.8 17.5 Q0.8 12.6 4.5 12.2 H12.2 Q15.9 12.6 15.9 17.5 Z" fill="#e6f0f9" stroke="#c9d6e2" stroke-width="0.5"/><path d="M1.6 16.9 Q1.6 12.6 5 12.4 H11.6 Q15.1 12.6 15.2 16.9 Z" fill="#2b7bc6"/></svg>
<div class="t" style="left:122px;top:439.8px;font-size:12.4px;line-height:16px;color:#222;font-weight:normal;">Dena Muller</div>
<div class="t" style="left:298px;top:439.8px;width:174px;overflow:hidden;font-size:12.4px;line-height:16px;color:#222">Dena.Muller@sygx2.onmicrosc</div>
<svg class="b" style="left:474px;top:439px" width="17" height="14" viewBox="0 0 17 14"><g fill="#3a72b8"><circle cx="11.2" cy="3.6" r="3"/><circle cx="14" cy="6" r="2.6"/><rect x="9" y="4" width="6.5" height="5" rx="2"/></g><g fill="#2f6fba" stroke="#cfe0f2" stroke-width="0.7"><path d="M2.5 12.6 Q0.2 12.6 0.4 10.2 Q0.6 8 2.8 7.8 Q3.4 5.2 6.2 5.2 Q7.6 3.2 10 4.2 Q12.6 5 12.6 7.6 Q15.6 7.8 15.6 10.4 Q15.4 12.6 13 12.6 Z"/></g></svg>
<div class="b" style="left:37px;top:460px;width:456px;height:1px;background:#f5f5f5"></div>
<div class="b" style="left:493px;top:460px;width:692px;height:1px;background:#f6f6f6"></div>
<svg class="b" style="left:57px;top:464px" width="17" height="18" viewBox="0 0 17 18"><circle cx="8.3" cy="7.1" r="5.4" fill="#e6f0f9" stroke="#c9d6e2" stroke-width="0.5"/><circle cx="8.3" cy="7" r="4.6" fill="#2b7bc6"/><path d="M0.8 17.5 Q0.8 12.6 4.5 12.2 H12.2 Q15.9 12.6 15.9 17.5 Z" fill="#e6f0f9" stroke="#c9d6e2" stroke-width="0.5"/><path d="M1.6 16.9 Q1.6 12.6 5 12.4 H11.6 Q15.1 12.6 15.2 16.9 Z" fill="#2b7bc6"/></svg>
<div class="t" style="left:122px;top:467.8px;font-size:12.4px;line-height:16px;color:#222;font-weight:normal;">John Smith</div>
<div class="t" style="left:298px;top:467.8px;width:174px;overflow:hidden;font-size:12.4px;line-height:16px;color:#222">john.smith@ovh.ytria.io</div>
<svg class="b" style="left:474px;top:465px" width="17" height="17" viewBox="0 0 17 17"><path d="M5.2 6 H13.5" stroke="#3e9a6f" stroke-width="2.2" fill="none"/><path d="M9 1.8 L14.2 6 L9.8 10.2" stroke="#3e9a6f" stroke-width="2.5" fill="none"/><path d="M11.4 11.7 H2.2" stroke="#3e9a6f" stroke-width="2.2" fill="none"/><path d="M4.6 7.6 L1.2 11.6 L5.6 15.6" stroke="#3e9a6f" stroke-width="2.5" fill="none"/></svg>
<div class="t" style="left:494px;top:467.8px;font-size:12.4px;line-height:16px;color:#222;font-weight:normal;">Accounts</div>
<div class="b" style="left:493px;top:488px;width:692px;height:28px;background:#d3d3d3"></div>
<div class="b" style="left:37px;top:488px;width:456px;height:1px;background:#f5f5f5"></div>
<svg class="b" style="left:57px;top:492px" width="17" height="18" viewBox="0 0 17 18"><circle cx="8.3" cy="7.1" r="5.4" fill="#e6f0f9" stroke="#c9d6e2" stroke-width="0.5"/><circle cx="8.3" cy="7" r="4.6" fill="#2b7bc6"/><path d="M0.8 17.5 Q0.8 12.6 4.5 12.2 H12.2 Q15.9 12.6 15.9 17.5 Z" fill="#e6f0f9" stroke="#c9d6e2" stroke-width="0.5"/><path d="M1.6 16.9 Q1.6 12.6 5 12.4 H11.6 Q15.1 12.6 15.2 16.9 Z" fill="#2b7bc6"/></svg>
<div class="t" style="left:122px;top:495.8px;font-size:12.4px;line-height:16px;color:#222;font-weight:normal;">Charity Swift</div>
<div class="t" style="left:298px;top:495.8px;width:174px;overflow:hidden;font-size:12.4px;line-height:16px;color:#222">Charity.Swift@sygx2.onmicrosc</div>
<svg class="b" style="left:474px;top:495px" width="17" height="14" viewBox="0 0 17 14"><g fill="#3a72b8"><circle cx="11.2" cy="3.6" r="3"/><circle cx="14" cy="6" r="2.6"/><rect x="9" y="4" width="6.5" height="5" rx="2"/></g><g fill="#2f6fba" stroke="#cfe0f2" stroke-width="0.7"><path d="M2.5 12.6 Q0.2 12.6 0.4 10.2 Q0.6 8 2.8 7.8 Q3.4 5.2 6.2 5.2 Q7.6 3.2 10 4.2 Q12.6 5 12.6 7.6 Q15.6 7.8 15.6 10.4 Q15.4 12.6 13 12.6 Z"/></g></svg>
<div class="b" style="left:37px;top:516px;width:456px;height:1px;background:#f5f5f5"></div>
<div class="b" style="left:493px;top:516px;width:692px;height:1px;background:#f6f6f6"></div>
<svg class="b" style="left:57px;top:520px" width="17" height="18" viewBox="0 0 17 18"><circle cx="8.3" cy="7.1" r="5.4" fill="#e6f0f9" stroke="#c9d6e2" stroke-width="0.5"/><circle cx="8.3" cy="7" r="4.6" fill="#2b7bc6"/><path d="M0.8 17.5 Q0.8 12.6 4.5 12.2 H12.2 Q15.9 12.6 15.9 17.5 Z" fill="#e6f0f9" stroke="#c9d6e2" stroke-width="0.5"/><path d="M1.6 16.9 Q1.6 12.6 5 12.4 H11.6 Q15.1 12.6 15.2 16.9 Z" fill="#2b7bc6"/></svg>
<div class="t" style="left:122px;top:523.8px;font-size:12.4px;line-height:16px;color:#222;font-weight:normal;">Giselle Mccoy</div>
<div class="t" style="left:298px;top:523.8px;width:174px;overflow:hidden;font-size:12.4px;line-height:16px;color:#222">Giselle.Mccoy@sygx2.onmicros</div>
<svg class="b" style="left:474px;top:521px" width="17" height="17" viewBox="0 0 17 17"><path d="M5.2 6 H13.5" stroke="#3e9a6f" stroke-width="2.2" fill="none"/><path d="M9 1.8 L14.2 6 L9.8 10.2" stroke="#3e9a6f" stroke-width="2.5" fill="none"/><path d="M11.4 11.7 H2.2" stroke="#3e9a6f" stroke-width="2.2" fill="none"/><path d="M4.6 7.6 L1.2 11.6 L5.6 15.6" stroke="#3e9a6f" stroke-width="2.5" fill="none"/></svg>
<div class="t" style="left:494px;top:523.8px;font-size:12.4px;line-height:16px;color:#222;font-weight:normal;">Accounts</div>
<div class="b" style="left:493px;top:544px;width:692px;height:28px;background:#d3d3d3"></div>
<div class="b" style="left:37px;top:544px;width:456px;height:1px;background:#f5f5f5"></div>
<svg class="b" style="left:57px;top:548px" width="17" height="18" viewBox="0 0 17 18"><circle cx="8.3" cy="7.1" r="5.4" fill="#e6f0f9" stroke="#c9d6e2" stroke-width="0.5"/><circle cx="8.3" cy="7" r="4.6" fill="#2b7bc6"/><path d="M0.8 17.5 Q0.8 12.6 4.5 12.2 H12.2 Q15.9 12.6 15.9 17.5 Z" fill="#e6f0f9" stroke="#c9d6e2" stroke-width="0.5"/><path d="M1.6 16.9 Q1.6 12.6 5 12.4 H11.6 Q15.1 12.6 15.2 16.9 Z" fill="#2b7bc6"/></svg>
<div class="t" style="left:122px;top:551.8px;font-size:12.4px;line-height:16px;color:#222;font-weight:normal;">Jesus White</div>
<div class="t" style="left:298px;top:551.8px;width:174px;overflow:hidden;font-size:12.4px;line-height:16px;color:#222">Jesus.White@sygx2.onmicroso</div>
<svg class="b" style="left:474px;top:551px" width="17" height="14" viewBox="0 0 17 14"><g fill="#3a72b8"><circle cx="11.2" cy="3.6" r="3"/><circle cx="14" cy="6" r="2.6"/><rect x="9" y="4" width="6.5" height="5" rx="2"/></g><g fill="#2f6fba" stroke="#cfe0f2" stroke-width="0.7"><path d="M2.5 12.6 Q0.2 12.6 0.4 10.2 Q0.6 8 2.8 7.8 Q3.4 5.2 6.2 5.2 Q7.6 3.2 10 4.2 Q12.6 5 12.6 7.6 Q15.6 7.8 15.6 10.4 Q15.4 12.6 13 12.6 Z"/></g></svg>
<div class="b" style="left:37px;top:572px;width:456px;height:1px;background:#f5f5f5"></div>
<div class="b" style="left:493px;top:572px;width:692px;height:1px;background:#f6f6f6"></div>
<svg class="b" style="left:57px;top:576px" width="17" height="18" viewBox="0 0 17 18"><circle cx="8.3" cy="7.1" r="5.4" fill="#e6f0f9" stroke="#c9d6e2" stroke-width="0.5"/><circle cx="8.3" cy="7" r="4.6" fill="#2b7bc6"/><path d="M0.8 17.5 Q0.8 12.6 4.5 12.2 H12.2 Q15.9 12.6 15.9 17.5 Z" fill="#e6f0f9" stroke="#c9d6e2" stroke-width="0.5"/><path d="M1.6 16.9 Q1.6 12.6 5 12.4 H11.6 Q15.1 12.6 15.2 16.9 Z" fill="#2b7bc6"/></svg>
<div class="t" style="left:122px;top:579.8px;font-size:12.4px;line-height:16px;color:#222;font-weight:normal;">Seyeta Smith</div>
<div class="t" style="left:298px;top:579.8px;width:174px;overflow:hidden;font-size:12.4px;line-height:16px;color:#222">Seyeta.smith@ovh.ytria.io</div>
<svg class="b" style="left:474px;top:577px" width="17" height="17" viewBox="0 0 17 17"><path d="M5.2 6 H13.5" stroke="#3e9a6f" stroke-width="2.2" fill="none"/><path d="M9 1.8 L14.2 6 L9.8 10.2" stroke="#3e9a6f" stroke-width="2.5" fill="none"/><path d="M11.4 11.7 H2.2" stroke="#3e9a6f" stroke-width="2.2" fill="none"/><path d="M4.6 7.6 L1.2 11.6 L5.6 15.6" stroke="#3e9a6f" stroke-width="2.5" fill="none"/></svg>
<div class="t" style="left:494px;top:579.8px;font-size:12.4px;line-height:16px;color:#222;font-weight:normal;">Other-Users</div>
<div class="b" style="left:37px;top:600px;width:1148px;height:28px;background:#0b74d8"></div>
<div class="b" style="left:56px;top:600px;width:1px;height:28px;background:#5aa6ec"></div>
<div class="b" style="left:76px;top:600px;width:1px;height:28px;background:#5aa6ec"></div>
<div class="b" style="left:101px;top:600px;width:1px;height:28px;background:#5aa6ec"></div>
<div class="b" style="left:472px;top:600px;width:1px;height:28px;background:#5aa6ec"></div>
<svg class="b" style="left:57px;top:604px" width="17" height="18" viewBox="0 0 17 18"><circle cx="8.4" cy="7" r="4.6" fill="#2a6db3" stroke="#e8f3fc" stroke-width="1.3"/><path d="M1.3 17.2 Q1.3 12.8 5 12.6 H11.8 Q15.5 12.8 15.5 17.2 Z" fill="#2a6db3" stroke="#e8f3fc" stroke-width="1.3"/></svg>
<div class="t" style="left:122px;top:607.8px;font-size:12.4px;line-height:16px;color:#fff;font-weight:normal;">Miranda Cantrell</div>
<div class="t" style="left:298px;top:607.8px;width:174px;overflow:hidden;font-size:12.4px;line-height:16px;color:#fff">Miranda.Cantrell@sygx2.onmic</div>
<svg class="b" style="left:474px;top:605px" width="17" height="17" viewBox="0 0 17 17"><g stroke="#dff3ea" fill="none"><path d="M5.2 6 H13.5" stroke-width="3.6"/><path d="M9 1.8 L14.2 6 L9.8 10.2" stroke-width="3.9"/><path d="M11.4 11.7 H2.2" stroke-width="3.6"/><path d="M4.6 7.6 L1.2 11.6 L5.6 15.6" stroke-width="3.9"/></g><path d="M5.2 6 H13.5" stroke="#3e9a6f" stroke-width="2.2" fill="none"/><path d="M9 1.8 L14.2 6 L9.8 10.2" stroke="#3e9a6f" stroke-width="2.5" fill="none"/><path d="M11.4 11.7 H2.2" stroke="#3e9a6f" stroke-width="2.2" fill="none"/><path d="M4.6 7.6 L1.2 11.6 L5.6 15.6" stroke="#3e9a6f" stroke-width="2.5" fill="none"/></svg>
<div class="t" style="left:494px;top:607.8px;font-size:12.4px;line-height:16px;color:#fff;font-weight:normal;">Accounts</div>
<div class="b" style="left:493px;top:628px;width:692px;height:28px;background:#d3d3d3"></div>
<svg class="b" style="left:57px;top:632px" width="17" height="18" viewBox="0 0 17 18"><circle cx="8.3" cy="7.1" r="5.4" fill="#e6f0f9" stroke="#c9d6e2" stroke-width="0.5"/><circle cx="8.3" cy="7" r="4.6" fill="#2b7bc6"/><path d="M0.8 17.5 Q0.8 12.6 4.5 12.2 H12.2 Q15.9 12.6 15.9 17.5 Z" fill="#e6f0f9" stroke="#c9d6e2" stroke-width="0.5"/><path d="M1.6 16.9 Q1.6 12.6 5 12.4 H11.6 Q15.1 12.6 15.2 16.9 Z" fill="#2b7bc6"/></svg>
<div class="t" style="left:122px;top:635.8px;font-size:12.4px;line-height:16px;color:#222;font-weight:normal;">Ariella Bolt</div>
<div class="t" style="left:298px;top:635.8px;width:174px;overflow:hidden;font-size:12.4px;line-height:16px;color:#222">Ariella.Bolt@sygx2.onmicrosof</div>
<svg class="b" style="left:474px;top:635px" width="17" height="14" viewBox="0 0 17 14"><g fill="#3a72b8"><circle cx="11.2" cy="3.6" r="3"/><circle cx="14" cy="6" r="2.6"/><rect x="9" y="4" width="6.5" height="5" rx="2"/></g><g fill="#2f6fba" stroke="#cfe0f2" stroke-width="0.7"><path d="M2.5 12.6 Q0.2 12.6 0.4 10.2 Q0.6 8 2.8 7.8 Q3.4 5.2 6.2 5.2 Q7.6 3.2 10 4.2 Q12.6 5 12.6 7.6 Q15.6 7.8 15.6 10.4 Q15.4 12.6 13 12.6 Z"/></g></svg>
<div class="b" style="left:493px;top:656px;width:692px;height:28px;background:#d3d3d3"></div>
<div class="b" style="left:493px;top:656px;width:692px;height:1px;background:#e0e0e0"></div>
<div class="b" style="left:37px;top:656px;width:456px;height:1px;background:#f5f5f5"></div>
<svg class="b" style="left:57px;top:660px" width="17" height="18" viewBox="0 0 17 18"><circle cx="8.3" cy="7.1" r="5.4" fill="#e6f0f9" stroke="#c9d6e2" stroke-width="0.5"/><circle cx="8.3" cy="7" r="4.6" fill="#2b7bc6"/><path d="M0.8 17.5 Q0.8 12.6 4.5 12.2 H12.2 Q15.9 12.6 15.9 17.5 Z" fill="#e6f0f9" stroke="#c9d6e2" stroke-width="0.5"/><path d="M1.6 16.9 Q1.6 12.6 5 12.4 H11.6 Q15.1 12.6 15.2 16.9 Z" fill="#2b7bc6"/></svg>
<div class="t" style="left:122px;top:663.8px;font-size:12.4px;line-height:16px;color:#222;font-weight:normal;">Preston Robinson</div>
<div class="t" style="left:298px;top:663.8px;width:174px;overflow:hidden;font-size:12.4px;line-height:16px;color:#222">Preston.Robinson@sygx2.onmi</div>
<svg class="b" style="left:474px;top:663px" width="17" height="14" viewBox="0 0 17 14"><g fill="#3a72b8"><circle cx="11.2" cy="3.6" r="3"/><circle cx="14" cy="6" r="2.6"/><rect x="9" y="4" width="6.5" height="5" rx="2"/></g><g fill="#2f6fba" stroke="#cfe0f2" stroke-width="0.7"><path d="M2.5 12.6 Q0.2 12.6 0.4 10.2 Q0.6 8 2.8 7.8 Q3.4 5.2 6.2 5.2 Q7.6 3.2 10 4.2 Q12.6 5 12.6 7.6 Q15.6 7.8 15.6 10.4 Q15.4 12.6 13 12.6 Z"/></g></svg>
<div class="b" style="left:37px;top:684px;width:456px;height:1px;background:#f5f5f5"></div>
<div class="b" style="left:493px;top:684px;width:692px;height:1px;background:#f6f6f6"></div>
<svg class="b" style="left:57px;top:688px" width="17" height="18" viewBox="0 0 17 18"><circle cx="8.3" cy="7.1" r="5.4" fill="#e6f0f9" stroke="#c9d6e2" stroke-width="0.5"/><circle cx="8.3" cy="7" r="4.6" fill="#2b7bc6"/><path d="M0.8 17.5 Q0.8 12.6 4.5 12.2 H12.2 Q15.9 12.6 15.9 17.5 Z" fill="#e6f0f9" stroke="#c9d6e2" stroke-width="0.5"/><path d="M1.6 16.9 Q1.6 12.6 5 12.4 H11.6 Q15.1 12.6 15.2 16.9 Z" fill="#2b7bc6"/></svg>
<div class="t" style="left:122px;top:691.8px;font-size:12.4px;line-height:16px;color:#222;font-weight:normal;">Raul Petersen</div>
<div class="t" style="left:298px;top:691.8px;width:174px;overflow:hidden;font-size:12.4px;line-height:16px;color:#222">Raul.Petersen@sygx2.onmicros</div>
<svg class="b" style="left:474px;top:689px" width="17" height="17" viewBox="0 0 17 17"><path d="M5.2 6 H13.5" stroke="#3e9a6f" stroke-width="2.2" fill="none"/><path d="M9 1.8 L14.2 6 L9.8 10.2" stroke="#3e9a6f" stroke-width="2.5" fill="none"/><path d="M11.4 11.7 H2.2" stroke="#3e9a6f" stroke-width="2.2" fill="none"/><path d="M4.6 7.6 L1.2 11.6 L5.6 15.6" stroke="#3e9a6f" stroke-width="2.5" fill="none"/></svg>
<div class="t" style="left:494px;top:691.8px;font-size:12.4px;line-height:16px;color:#222;font-weight:normal;">Accounts</div>
<div class="b" style="left:37px;top:712px;width:456px;height:1px;background:#f5f5f5"></div>
<div class="b" style="left:493px;top:712px;width:692px;height:1px;background:#f6f6f6"></div>
<svg class="b" style="left:57px;top:716px" width="17" height="18" viewBox="0 0 17 18"><circle cx="8.3" cy="7.1" r="5.4" fill="#e6f0f9" stroke="#c9d6e2" stroke-width="0.5"/><circle cx="8.3" cy="7" r="4.6" fill="#2b7bc6"/><path d="M0.8 17.5 Q0.8 12.6 4.5 12.2 H12.2 Q15.9 12.6 15.9 17.5 Z" fill="#e6f0f9" stroke="#c9d6e2" stroke-width="0.5"/><path d="M1.6 16.9 Q1.6 12.6 5 12.4 H11.6 Q15.1 12.6 15.2 16.9 Z" fill="#2b7bc6"/></svg>
<div class="t" style="left:122px;top:719.8px;font-size:12.4px;line-height:16px;color:#222;font-weight:normal;">Lilly Smith</div>
<div class="t" style="left:298px;top:719.8px;width:174px;overflow:hidden;font-size:12.4px;line-height:16px;color:#222">2196Lilly.smith@ovh.ytria.io</div>
<svg class="b" style="left:474px;top:717px" width="17" height="17" viewBox="0 0 17 17"><path d="M5.2 6 H13.5" stroke="#3e9a6f" stroke-width="2.2" fill="none"/><path d="M9 1.8 L14.2 6 L9.8 10.2" stroke="#3e9a6f" stroke-width="2.5" fill="none"/><path d="M11.4 11.7 H2.2" stroke="#3e9a6f" stroke-width="2.2" fill="none"/><path d="M4.6 7.6 L1.2 11.6 L5.6 15.6" stroke="#3e9a6f" stroke-width="2.5" fill="none"/></svg>
<div class="t" style="left:494px;top:719.8px;font-size:12.4px;line-height:16px;color:#222;font-weight:normal;">Others-Users/Users</div>
<div class="b" style="left:37px;top:740px;width:456px;height:1px;background:#f5f5f5"></div>
<div class="b" style="left:493px;top:740px;width:692px;height:1px;background:#f6f6f6"></div>
<svg class="b" style="left:57px;top:744px" width="17" height="18" viewBox="0 0 17 18"><circle cx="8.3" cy="7.1" r="5.4" fill="#e6f0f9" stroke="#c9d6e2" stroke-width="0.5"/><circle cx="8.3" cy="7" r="4.6" fill="#2b7bc6"/><path d="M0.8 17.5 Q0.8 12.6 4.5 12.2 H12.2 Q15.9 12.6 15.9 17.5 Z" fill="#e6f0f9" stroke="#c9d6e2" stroke-width="0.5"/><path d="M1.6 16.9 Q1.6 12.6 5 12.4 H11.6 Q15.1 12.6 15.2 16.9 Z" fill="#2b7bc6"/></svg>
<div class="t" style="left:122px;top:747.8px;font-size:12.4px;line-height:16px;color:#222;font-weight:normal;">Kristen Koch</div>
<div class="t" style="left:298px;top:747.8px;width:174px;overflow:hidden;font-size:12.4px;line-height:16px;color:#222">Kristen.Koch@sygx2.onmicrosc</div>
<svg class="b" style="left:474px;top:745px" width="17" height="17" viewBox="0 0 17 17"><path d="M5.2 6 H13.5" stroke="#3e9a6f" stroke-width="2.2" fill="none"/><path d="M9 1.8 L14.2 6 L9.8 10.2" stroke="#3e9a6f" stroke-width="2.5" fill="none"/><path d="M11.4 11.7 H2.2" stroke="#3e9a6f" stroke-width="2.2" fill="none"/><path d="M4.6 7.6 L1.2 11.6 L5.6 15.6" stroke="#3e9a6f" stroke-width="2.5" fill="none"/></svg>
<div class="t" style="left:494px;top:747.8px;font-size:12.4px;line-height:16px;color:#222;font-weight:normal;">Accounts</div>
<div class="b" style="left:37px;top:768px;width:456px;height:1px;background:#f5f5f5"></div>
<div class="b" style="left:493px;top:768px;width:692px;height:1px;background:#f6f6f6"></div>
<svg class="b" style="left:57px;top:772px" width="17" height="18" viewBox="0 0 17 18"><circle cx="8.3" cy="7.1" r="5.4" fill="#e6f0f9" stroke="#c9d6e2" stroke-width="0.5"/><circle cx="8.3" cy="7" r="4.6" fill="#2b7bc6"/><path d="M0.8 17.5 Q0.8 12.6 4.5 12.2 H12.2 Q15.9 12.6 15.9 17.5 Z" fill="#e6f0f9" stroke="#c9d6e2" stroke-width="0.5"/><path d="M1.6 16.9 Q1.6 12.6 5 12.4 H11.6 Q15.1 12.6 15.2 16.9 Z" fill="#2b7bc6"/></svg>
<div class="t" style="left:122px;top:775.8px;font-size:12.4px;line-height:16px;color:#222;font-weight:normal;">Amy-Coco</div>
<div class="t" style="left:298px;top:775.8px;width:174px;overflow:hidden;font-size:12.4px;line-height:16px;color:#222">Coco.Amy@sygx2.onmicrosoft</div>
<svg class="b" style="left:474px;top:773px" width="17" height="17" viewBox="0 0 17 17"><path d="M5.2 6 H13.5" stroke="#3e9a6f" stroke-width="2.2" fill="none"/><path d="M9 1.8 L14.2 6 L9.8 10.2" stroke="#3e9a6f" stroke-width="2.5" fill="none"/><path d="M11.4 11.7 H2.2" stroke="#3e9a6f" stroke-width="2.2" fill="none"/><path d="M4.6 7.6 L1.2 11.6 L5.6 15.6" stroke="#3e9a6f" stroke-width="2.5" fill="none"/></svg>
<div class="t" style="left:494px;top:775.8px;font-size:12.4px;line-height:16px;color:#222;font-weight:normal;">Other-Users</div>
<div class="b" style="left:493px;top:796px;width:692px;height:28px;background:#d3d3d3"></div>
<div class="b" style="left:37px;top:796px;width:456px;height:1px;background:#f5f5f5"></div>
<svg class="b" style="left:57px;top:800px" width="17" height="18" viewBox="0 0 17 18"><circle cx="8.3" cy="7.1" r="5.4" fill="#e6f0f9" stroke="#c9d6e2" stroke-width="0.5"/><circle cx="8.3" cy="7" r="4.6" fill="#2b7bc6"/><path d="M0.8 17.5 Q0.8 12.6 4.5 12.2 H12.2 Q15.9 12.6 15.9 17.5 Z" fill="#e6f0f9" stroke="#c9d6e2" stroke-width="0.5"/><path d="M1.6 16.9 Q1.6 12.6 5 12.4 H11.6 Q15.1 12.6 15.2 16.9 Z" fill="#2b7bc6"/></svg>
<div class="t" style="left:122px;top:803.8px;font-size:12.4px;line-height:16px;color:#222;font-weight:normal;">Patrick Campbell</div>
<div class="t" style="left:298px;top:803.8px;width:174px;overflow:hidden;font-size:12.4px;line-height:16px;color:#222">Patrick.Campbell@sygx2.onmic</div>
<svg class="b" style="left:474px;top:803px" width="17" height="14" viewBox="0 0 17 14"><g fill="#3a72b8"><circle cx="11.2" cy="3.6" r="3"/><circle cx="14" cy="6" r="2.6"/><rect x="9" y="4" width="6.5" height="5" rx="2"/></g><g fill="#2f6fba" stroke="#cfe0f2" stroke-width="0.7"><path d="M2.5 12.6 Q0.2 12.6 0.4 10.2 Q0.6 8 2.8 7.8 Q3.4 5.2 6.2 5.2 Q7.6 3.2 10 4.2 Q12.6 5 12.6 7.6 Q15.6 7.8 15.6 10.4 Q15.4 12.6 13 12.6 Z"/></g></svg>
<div class="b" style="left:493px;top:824px;width:692px;height:28px;background:#d3d3d3"></div>
<div class="b" style="left:493px;top:824px;width:692px;height:1px;background:#e0e0e0"></div>
<div class="b" style="left:37px;top:824px;width:456px;height:1px;background:#f5f5f5"></div>
<svg class="b" style="left:57px;top:828px" width="17" height="18" viewBox="0 0 17 18"><circle cx="8.3" cy="7.1" r="5.4" fill="#e6f0f9" stroke="#c9d6e2" stroke-width="0.5"/><circle cx="8.3" cy="7" r="4.6" fill="#2b7bc6"/><path d="M0.8 17.5 Q0.8 12.6 4.5 12.2 H12.2 Q15.9 12.6 15.9 17.5 Z" fill="#e6f0f9" stroke="#c9d6e2" stroke-width="0.5"/><path d="M1.6 16.9 Q1.6 12.6 5 12.4 H11.6 Q15.1 12.6 15.2 16.9 Z" fill="#2b7bc6"/></svg>
<div class="t" style="left:122px;top:831.8px;font-size:12.4px;line-height:16px;color:#222;font-weight:normal;">Xavier Hernandez</div>
<div class="t" style="left:298px;top:831.8px;width:174px;overflow:hidden;font-size:12.4px;line-height:16px;color:#222">Xavier.Hernandez@sygx2.onmi</div>
<svg class="b" style="left:474px;top:831px" width="17" height="14" viewBox="0 0 17 14"><g fill="#3a72b8"><circle cx="11.2" cy="3.6" r="3"/><circle cx="14" cy="6" r="2.6"/><rect x="9" y="4" width="6.5" height="5" rx="2"/></g><g fill="#2f6fba" stroke="#cfe0f2" stroke-width="0.7"><path d="M2.5 12.6 Q0.2 12.6 0.4 10.2 Q0.6 8 2.8 7.8 Q3.4 5.2 6.2 5.2 Q7.6 3.2 10 4.2 Q12.6 5 12.6 7.6 Q15.6 7.8 15.6 10.4 Q15.4 12.6 13 12.6 Z"/></g></svg>
<div class="b" style="left:37px;top:852px;width:456px;height:1px;background:#f5f5f5"></div>
<div class="b" style="left:493px;top:852px;width:692px;height:1px;background:#f6f6f6"></div>
<svg class="b" style="left:57px;top:856px" width="17" height="18" viewBox="0 0 17 18"><circle cx="8.3" cy="7.1" r="5.4" fill="#e6f0f9" stroke="#c9d6e2" stroke-width="0.5"/><circle cx="8.3" cy="7" r="4.6" fill="#2b7bc6"/><path d="M0.8 17.5 Q0.8 12.6 4.5 12.2 H12.2 Q15.9 12.6 15.9 17.5 Z" fill="#e6f0f9" stroke="#c9d6e2" stroke-width="0.5"/><path d="M1.6 16.9 Q1.6 12.6 5 12.4 H11.6 Q15.1 12.6 15.2 16.9 Z" fill="#2b7bc6"/></svg>
<div class="t" style="left:122px;top:859.8px;font-size:12.4px;line-height:16px;color:#222;font-weight:normal;">Emely Stevenson</div>
<div class="t" style="left:298px;top:859.8px;width:174px;overflow:hidden;font-size:12.4px;line-height:16px;color:#222">Emely.Stevenson@sygx2.onmic</div>
<svg class="b" style="left:474px;top:857px" width="17" height="17" viewBox="0 0 17 17"><path d="M5.2 6 H13.5" stroke="#3e9a6f" stroke-width="2.2" fill="none"/><path d="M9 1.8 L14.2 6 L9.8 10.2" stroke="#3e9a6f" stroke-width="2.5" fill="none"/><path d="M11.4 11.7 H2.2" stroke="#3e9a6f" stroke-width="2.2" fill="none"/><path d="M4.6 7.6 L1.2 11.6 L5.6 15.6" stroke="#3e9a6f" stroke-width="2.5" fill="none"/></svg>
<div class="t" style="left:494px;top:859.8px;font-size:12.4px;line-height:16px;color:#222;font-weight:normal;">Accounts</div>
<div class="b" style="left:37px;top:880px;width:456px;height:1px;background:#f5f5f5"></div>
<div class="b" style="left:493px;top:880px;width:692px;height:1px;background:#f6f6f6"></div>
<svg class="b" style="left:57px;top:884px" width="17" height="18" viewBox="0 0 17 18"><circle cx="8.3" cy="7.1" r="5.4" fill="#e6f0f9" stroke="#c9d6e2" stroke-width="0.5"/><circle cx="8.3" cy="7" r="4.6" fill="#2b7bc6"/><path d="M0.8 17.5 Q0.8 12.6 4.5 12.2 H12.2 Q15.9 12.6 15.9 17.5 Z" fill="#e6f0f9" stroke="#c9d6e2" stroke-width="0.5"/><path d="M1.6 16.9 Q1.6 12.6 5 12.4 H11.6 Q15.1 12.6 15.2 16.9 Z" fill="#2b7bc6"/></svg>
<div class="t" style="left:122px;top:887.8px;font-size:12.4px;line-height:16px;color:#222;font-weight:normal;">Abbey.Coleman</div>
<div class="t" style="left:298px;top:887.8px;width:174px;overflow:hidden;font-size:12.4px;line-height:16px;color:#222">Abbey.Coleman@ovh.ytria.io</div>
<svg class="b" style="left:474px;top:885px" width="17" height="17" viewBox="0 0 17 17"><path d="M5.2 6 H13.5" stroke="#3e9a6f" stroke-width="2.2" fill="none"/><path d="M9 1.8 L14.2 6 L9.8 10.2" stroke="#3e9a6f" stroke-width="2.5" fill="none"/><path d="M11.4 11.7 H2.2" stroke="#3e9a6f" stroke-width="2.2" fill="none"/><path d="M4.6 7.6 L1.2 11.6 L5.6 15.6" stroke="#3e9a6f" stroke-width="2.5" fill="none"/></svg>
<div class="t" style="left:494px;top:887.8px;font-size:12.4px;line-height:16px;color:#222;font-weight:normal;">Other-Users</div>
<div class="b" style="left:37px;top:908px;width:456px;height:1px;background:#f5f5f5"></div>
<div class="b" style="left:493px;top:908px;width:692px;height:1px;background:#f6f6f6"></div>
<svg class="b" style="left:57px;top:912px" width="17" height="18" viewBox="0 0 17 18"><circle cx="8.3" cy="7.1" r="5.4" fill="#e6f0f9" stroke="#c9d6e2" stroke-width="0.5"/><circle cx="8.3" cy="7" r="4.6" fill="#2b7bc6"/><path d="M0.8 17.5 Q0.8 12.6 4.5 12.2 H12.2 Q15.9 12.6 15.9 17.5 Z" fill="#e6f0f9" stroke="#c9d6e2" stroke-width="0.5"/><path d="M1.6 16.9 Q1.6 12.6 5 12.4 H11.6 Q15.1 12.6 15.2 16.9 Z" fill="#2b7bc6"/></svg>
<div class="t" style="left:122px;top:915.8px;font-size:12.4px;line-height:16px;color:#222;font-weight:normal;">Leyla Mooney</div>
<div class="t" style="left:298px;top:915.8px;width:174px;overflow:hidden;font-size:12.4px;line-height:16px;color:#222">Leyla.Mooney@sygx2.onmicros</div>
<svg class="b" style="left:474px;top:913px" width="17" height="17" viewBox="0 0 17 17"><path d="M5.2 6 H13.5" stroke="#3e9a6f" stroke-width="2.2" fill="none"/><path d="M9 1.8 L14.2 6 L9.8 10.2" stroke="#3e9a6f" stroke-width="2.5" fill="none"/><path d="M11.4 11.7 H2.2" stroke="#3e9a6f" stroke-width="2.2" fill="none"/><path d="M4.6 7.6 L1.2 11.6 L5.6 15.6" stroke="#3e9a6f" stroke-width="2.5" fill="none"/></svg>
<div class="t" style="left:494px;top:915.8px;font-size:12.4px;line-height:16px;color:#222;font-weight:normal;">Accounts</div>
<div class="b" style="left:493px;top:936px;width:692px;height:28px;background:#d3d3d3"></div>
<div class="b" style="left:37px;top:936px;width:456px;height:1px;background:#f5f5f5"></div>
<svg class="b" style="left:57px;top:940px" width="17" height="18" viewBox="0 0 17 18"><circle cx="8.3" cy="7.1" r="5.4" fill="#e6f0f9" stroke="#c9d6e2" stroke-width="0.5"/><circle cx="8.3" cy="7" r="4.6" fill="#2b7bc6"/><path d="M0.8 17.5 Q0.8 12.6 4.5 12.2 H12.2 Q15.9 12.6 15.9 17.5 Z" fill="#e6f0f9" stroke="#c9d6e2" stroke-width="0.5"/><path d="M1.6 16.9 Q1.6 12.6 5 12.4 H11.6 Q15.1 12.6 15.2 16.9 Z" fill="#2b7bc6"/></svg>
<div class="t" style="left:122px;top:943.8px;font-size:12.4px;line-height:16px;color:#222;font-weight:normal;">Jameson Kade</div>
<div class="t" style="left:298px;top:943.8px;width:174px;overflow:hidden;font-size:12.4px;line-height:16px;color:#222">Jameson.Kade@sygx2.onmicro</div>
<svg class="b" style="left:474px;top:943px" width="17" height="14" viewBox="0 0 17 14"><g fill="#3a72b8"><circle cx="11.2" cy="3.6" r="3"/><circle cx="14" cy="6" r="2.6"/><rect x="9" y="4" width="6.5" height="5" rx="2"/></g><g fill="#2f6fba" stroke="#cfe0f2" stroke-width="0.7"><path d="M2.5 12.6 Q0.2 12.6 0.4 10.2 Q0.6 8 2.8 7.8 Q3.4 5.2 6.2 5.2 Q7.6 3.2 10 4.2 Q12.6 5 12.6 7.6 Q15.6 7.8 15.6 10.4 Q15.4 12.6 13 12.6 Z"/></g></svg>
<div class="b" style="left:493px;top:964px;width:692px;height:28px;background:#d3d3d3"></div>
<div class="b" style="left:493px;top:964px;width:692px;height:1px;background:#e0e0e0"></div>
<div class="b" style="left:37px;top:964px;width:456px;height:1px;background:#f5f5f5"></div>
<svg class="b" style="left:57px;top:968px" width="17" height="18" viewBox="0 0 17 18"><circle cx="8.3" cy="7.1" r="5.4" fill="#e6f0f9" stroke="#c9d6e2" stroke-width="0.5"/><circle cx="8.3" cy="7" r="4.6" fill="#2b7bc6"/><path d="M0.8 17.5 Q0.8 12.6 4.5 12.2 H12.2 Q15.9 12.6 15.9 17.5 Z" fill="#e6f0f9" stroke="#c9d6e2" stroke-width="0.5"/><path d="M1.6 16.9 Q1.6 12.6 5 12.4 H11.6 Q15.1 12.6 15.2 16.9 Z" fill="#2b7bc6"/></svg>
<div class="t" style="left:122px;top:971.8px;font-size:12.4px;line-height:16px;color:#222;font-weight:normal;">Colin Grant</div>
<div class="t" style="left:298px;top:971.8px;width:174px;overflow:hidden;font-size:12.4px;line-height:16px;color:#222">Colin.Grant@sygx2.onmicrosof</div>
<svg class="b" style="left:474px;top:971px" width="17" height="14" viewBox="0 0 17 14"><g fill="#3a72b8"><circle cx="11.2" cy="3.6" r="3"/><circle cx="14" cy="6" r="2.6"/><rect x="9" y="4" width="6.5" height="5" rx="2"/></g><g fill="#2f6fba" stroke="#cfe0f2" stroke-width="0.7"><path d="M2.5 12.6 Q0.2 12.6 0.4 10.2 Q0.6 8 2.8 7.8 Q3.4 5.2 6.2 5.2 Q7.6 3.2 10 4.2 Q12.6 5 12.6 7.6 Q15.6 7.8 15.6 10.4 Q15.4 12.6 13 12.6 Z"/></g></svg>
<div class="b" style="left:493px;top:992px;width:692px;height:28px;background:#d3d3d3"></div>
<div class="b" style="left:493px;top:992px;width:692px;height:1px;background:#e0e0e0"></div>
<div class="b" style="left:37px;top:992px;width:456px;height:1px;background:#f5f5f5"></div>
<svg class="b" style="left:57px;top:996px" width="17" height="18" viewBox="0 0 17 18"><circle cx="8.3" cy="7.1" r="5.4" fill="#e6f0f9" stroke="#c9d6e2" stroke-width="0.5"/><circle cx="8.3" cy="7" r="4.6" fill="#2b7bc6"/><path d="M0.8 17.5 Q0.8 12.6 4.5 12.2 H12.2 Q15.9 12.6 15.9 17.5 Z" fill="#e6f0f9" stroke="#c9d6e2" stroke-width="0.5"/><path d="M1.6 16.9 Q1.6 12.6 5 12.4 H11.6 Q15.1 12.6 15.2 16.9 Z" fill="#2b7bc6"/></svg>
<div class="t" style="left:122px;top:999.8px;font-size:12.4px;line-height:16px;color:#222;font-weight:normal;">Charlotte Steuber</div>
<div class="t" style="left:298px;top:999.8px;width:174px;overflow:hidden;font-size:12.4px;line-height:16px;color:#222">Charlotte.Steuber@sygx2.onmi</div>
<svg class="b" style="left:474px;top:999px" width="17" height="14" viewBox="0 0 17 14"><g fill="#3a72b8"><circle cx="11.2" cy="3.6" r="3"/><circle cx="14" cy="6" r="2.6"/><rect x="9" y="4" width="6.5" height="5" rx="2"/></g><g fill="#2f6fba" stroke="#cfe0f2" stroke-width="0.7"><path d="M2.5 12.6 Q0.2 12.6 0.4 10.2 Q0.6 8 2.8 7.8 Q3.4 5.2 6.2 5.2 Q7.6 3.2 10 4.2 Q12.6 5 12.6 7.6 Q15.6 7.8 15.6 10.4 Q15.4 12.6 13 12.6 Z"/></g></svg>
<div class="b" style="left:121px;top:237px;width:1px;height:784px;background:#2b7bc6"></div>
<div class="b" style="left:295px;top:237px;width:1px;height:784px;background:#2b7bc6"></div>
<div class="b" style="left:492px;top:213px;width:1px;height:808px;background:#3c4654"></div>
<div class="b" style="left:37px;top:1021px;width:1148px;height:16px;background:#fff"></div>
<div class="b" style="left:54px;top:1021px;width:1131px;height:16px;background:#8e8e8e"></div>
<svg class="b" style="left:42px;top:1024px" width="8" height="10" viewBox="0 0 8 10"><path d="M6 0.5 L6 9.5 L0.5 5 Z" fill="#4a5a78"/></svg>
<div class="b" style="left:0px;top:1037px;width:1185px;height:21px;background:#fafafa"></div>
<div class="t" style="left:-6.2px;top:1041.0px;font-size:12.3px;line-height:16px;color:#222;font-weight:normal;">R</div>
<div class="t" style="left:3.40px;top:1041.0px;font-size:12.3px;line-height:16px;color:#222;font-weight:normal;letter-spacing:-0.014px;">ows Loaded: 376 | Rows Displayed: 376 | Rows Selected: 1</div>
<div class="b" style="left:0px;top:1058px;width:1185px;height:19px;background:#d6d6d6"></div>
<div class="b" style="left:0px;top:1077px;width:1185px;height:1px;background:#b5b5b5"></div>
<div class="t" style="left:-6.8px;top:1061.8px;font-size:12.3px;line-height:16px;color:#707070;font-weight:normal;">R</div>
<div class="t" style="left:1.80px;top:1061.8px;font-size:12.3px;line-height:16px;color:#707070;font-weight:normal;letter-spacing:0.203px;">eady</div>
<div class="b" style="left:670px;top:237px;width:1px;height:784px;background:rgba(255,255,255,0.35)"></div>
<div class="b" style="left:733px;top:237px;width:1px;height:784px;background:rgba(255,255,255,0.35)"></div>
<div class="b" style="left:908px;top:237px;width:1px;height:784px;background:rgba(255,255,255,0.35)"></div>
<div class="b" style="left:1085px;top:237px;width:1px;height:784px;background:rgba(255,255,255,0.35)"></div>
<div class="b" style="left:633px;top:218px;width:500px;height:713px;border-radius:8px;background:#efefef;box-shadow:0 10px 38px rgba(0,0,0,0.34);border:1px solid #bdbdbd;box-sizing:border-box;overflow:hidden">
<div class="b" style="left:0;top:0;width:100%;height:99px;background:linear-gradient(#efeff9 0px,#f0f0f7 25px,#efefef 45px)"></div>
<div class="b" style="left:0;bottom:0;width:100%;height:39px;background:#fff"></div>
</div>
<svg class="b" style="left:641px;top:225px" width="15.2" height="15.2" viewBox="0 0 16 16"><circle cx="7.8" cy="7.8" r="7" fill="#fff" stroke="#9458a8" stroke-width="1.5"/><circle cx="7.8" cy="7.8" r="5.3" fill="#9458a8"/><path d="M2.8 3.8 L7.8 8 L12.8 3.8 M7.8 8 V10 L4.6 14.2 M7.8 10 L11 14.2" stroke="#fff" stroke-width="1.2" fill="none"/><circle cx="7.8" cy="3.6" r="1.3" fill="#fff"/></svg>
<div class="t" style="left:661.20px;top:224.1px;font-size:12.0px;line-height:16px;color:#222;font-weight:normal;letter-spacing:-0.182px;">Edit 1 user(s) on-premises</div>
<svg class="b" style="left:1111px;top:226px" width="12" height="12" viewBox="0 0 12 12"><path d="M1 1 L11 11 M11 1 L1 11" stroke="#333" stroke-width="1.4"/></svg>
<div class="b" style="left:917px;top:252px;width:95px;height:27px;background:#fafafa;border:1px solid #e4e4e4;box-sizing:border-box"></div>
<svg class="b" style="left:929px;top:260px" width="11" height="11" viewBox="0 0 11 11"><rect x="0" y="0" width="11" height="11" fill="#2d5a94"/><rect x="2.5" y="4.6" width="6" height="1.8" fill="#fff"/></svg>
<div class="t" style="left:944px;top:258.0px;font-size:11.9px;line-height:15px;color:#555;font-weight:normal;">Collapse All</div>
<div class="b" style="left:1026px;top:252px;width:95px;height:27px;background:#fafafa;border:1px solid #e4e4e4;box-sizing:border-box"></div>
<svg class="b" style="left:1041px;top:260px" width="11" height="11" viewBox="0 0 11 11"><rect x="0" y="0" width="11" height="11" fill="#2d5a94"/><rect x="2.5" y="4.6" width="6" height="1.8" fill="#fff"/><rect x="4.6" y="2.5" width="1.8" height="6" fill="#fff"/></svg>
<div class="t" style="left:1056px;top:258.0px;font-size:11.9px;line-height:15px;color:#555;font-weight:normal;">Expand All</div>
<div class="b" style="left:645px;top:288px;width:28px;height:24px;background:#f7f7f7;border:1px solid #e1e1e1;box-sizing:border-box"></div>
<svg class="b" style="left:651px;top:294px" width="17" height="14" viewBox="0 0 17 14"><path d="M1.5 8 L7.5 2 L13.5 8 L9 12.5 H5.5 Z" fill="#b9b9b9"/><path d="M1.5 8 L5.5 12 H9 L4.5 7.5 Z" fill="#fff" stroke="#aaa" stroke-width="1"/><rect x="2" y="12.3" width="13" height="1.3" fill="#aaa"/></svg>
<div class="b" style="left:678px;top:288px;width:411px;height:24px;background:#f7f7f7;border:1px solid #e1e1e1;box-sizing:border-box"></div>
<div class="t" style="left:683.50px;top:292.7px;font-size:12.0px;line-height:16px;color:#808080;font-weight:normal;letter-spacing:-0.325px;">Quick search</div>
<div class="b" style="left:1093px;top:288px;width:28px;height:24px;background:#f7f7f7;border:1px solid #e1e1e1;box-sizing:border-box"></div>
<svg class="b" style="left:1100px;top:293px" width="15" height="15" viewBox="0 0 15 15"><circle cx="6" cy="6" r="4.5" fill="none" stroke="#2d5a94" stroke-width="2.2"/><path d="M9.3 9.3 L13.5 13.5" stroke="#2d5a94" stroke-width="2.6"/></svg>
<div class="b" style="left:638px;top:318px;width:490px;height:5px;background:#dcdcdc"></div>
<div class="b" style="left:638px;top:323px;width:490px;height:250px;background:#fff"></div>
<div class="t" style="left:666.50px;top:331.2px;font-size:14.0px;line-height:18px;color:#3b5d8e;font-weight:normal;letter-spacing:1.495px;-webkit-text-stroke:0.55px #3b5d8e">Mandatory Information</div>
<svg class="b" style="left:1096px;top:333px" width="17" height="11" viewBox="0 0 17 11"><path d="M1.5 1.5 L8.5 8.5 L15.5 1.5" stroke="#36598a" stroke-width="2" fill="none"/></svg>
<div class="b" style="left:638px;top:355px;width:490px;height:1px;background:#e8e8e8"></div>
<div class="b" style="left:800px;top:366px;width:318px;height:28px;background:#f2f2f2"></div>
<div class="t" style="left:652.40px;top:369.5px;font-size:12.0px;line-height:16px;color:#333;font-weight:normal;letter-spacing:-0.347px;">Name</div>
<div class="b" style="left:806px;top:371px;width:19px;height:22px;background:#fbfbfb;border:1px solid #e0e0e0;border-radius:3px;box-sizing:border-box;box-shadow:0 1px 2px rgba(0,0,0,0.15)"></div>
<svg class="b" style="left:807.5px;top:374px" width="16" height="16" viewBox="0 0 16 16"><path d="M1.5 11.5 L10.5 2.5 L13.5 5.5 L4.5 14.5 Z" fill="#3767a6"/><path d="M11.5 1.5 Q12.5 0.5 13.5 1.5 L14.5 2.5 Q15.5 3.5 14.5 4.5 Z" fill="#3767a6"/><path d="M1.5 11.5 L4.5 14.5 L0.5 15.5 Z" fill="#3767a6"/></svg>
<div class="t" style="left:832.20px;top:373.0px;font-size:12.0px;line-height:16px;color:#222;font-weight:normal;letter-spacing:-0.052px;">Miranda Cantrell</div>
<div class="b" style="left:800px;top:403px;width:318px;height:32px;background:#f2f2f2"></div>
<div class="t" style="left:652.40px;top:408.6px;font-size:12.0px;line-height:16px;color:#333;font-weight:normal;letter-spacing:0.016px;">Organizational Unit</div>
<svg class="b" style="left:807px;top:413px" width="16" height="16" viewBox="0 0 16 16"><path d="M1.5 11.5 L10.5 2.5 L13.5 5.5 L4.5 14.5 Z" fill="#3767a6"/><path d="M11.5 1.5 Q12.5 0.5 13.5 1.5 L14.5 2.5 Q15.5 3.5 14.5 4.5 Z" fill="#3767a6"/><path d="M1.5 11.5 L4.5 14.5 L0.5 15.5 Z" fill="#3767a6"/></svg>
<div class="t" style="left:835.70px;top:413.7px;font-size:12.0px;line-height:16px;color:#222;font-weight:normal;letter-spacing:-0.146px;">Accounts</div>
<div class="b" style="left:800px;top:444px;width:318px;height:31px;background:#f2f2f2"></div>
<div class="t" style="left:652.40px;top:448.2px;font-size:12.0px;line-height:16px;color:#333;font-weight:normal;letter-spacing:-0.186px;">User Principal Name</div>
<svg class="b" style="left:807px;top:451px" width="16" height="16" viewBox="0 0 16 16"><path d="M1.5 11.5 L10.5 2.5 L13.5 5.5 L4.5 14.5 Z" fill="#3767a6"/><path d="M11.5 1.5 Q12.5 0.5 13.5 1.5 L14.5 2.5 Q15.5 3.5 14.5 4.5 Z" fill="#3767a6"/><path d="M1.5 11.5 L4.5 14.5 L0.5 15.5 Z" fill="#3767a6"/></svg>
<div class="t" style="left:832.30px;top:451.2px;font-size:12.0px;line-height:16px;color:#222;font-weight:normal;letter-spacing:-0.032px;">Miranda.Cantrell@old_domain.onmicrosoft.com</div>
<div class="b" style="left:800px;top:483px;width:318px;height:36px;background:#f2f2f2"></div>
<div class="t" style="left:652.40px;top:488.0px;font-size:12.0px;line-height:13px;color:#333;font-weight:normal;letter-spacing:-0.240px;">Change Password At</div>
<div class="t" style="left:652.40px;top:500.5px;font-size:12.0px;line-height:13px;color:#333;font-weight:normal;letter-spacing:0.060px;">Logon</div>
<svg class="b" style="left:807px;top:491px" width="16" height="16" viewBox="0 0 16 16"><path d="M1.5 11.5 L10.5 2.5 L13.5 5.5 L4.5 14.5 Z" fill="#3767a6"/><path d="M11.5 1.5 Q12.5 0.5 13.5 1.5 L14.5 2.5 Q15.5 3.5 14.5 4.5 Z" fill="#3767a6"/><path d="M1.5 11.5 L4.5 14.5 L0.5 15.5 Z" fill="#3767a6"/></svg>
<div class="b" style="left:840px;top:490px;width:7px;height:19px;background:#6e6e6e"></div>
<div class="b" style="left:850px;top:492px;width:38px;height:17px;background:#cfcfcf"></div>
<div class="b" style="left:850px;top:494px;width:35px;height:12px;background:#838383"></div>
<div class="t" style="left:898.80px;top:491.3px;font-size:12.0px;line-height:16px;color:#222;font-weight:normal;letter-spacing:-0.360px;">No</div>
<div class="b" style="left:800px;top:527px;width:318px;height:36px;background:#f2f2f2"></div>
<div class="t" style="left:652.40px;top:530.4px;font-size:12.0px;line-height:16px;color:#333;font-weight:normal;letter-spacing:-0.457px;">Enabled</div>
<svg class="b" style="left:807px;top:535px" width="16" height="16" viewBox="0 0 16 16"><path d="M1.5 11.5 L10.5 2.5 L13.5 5.5 L4.5 14.5 Z" fill="#3767a6"/><path d="M11.5 1.5 Q12.5 0.5 13.5 1.5 L14.5 2.5 Q15.5 3.5 14.5 4.5 Z" fill="#3767a6"/><path d="M1.5 11.5 L4.5 14.5 L0.5 15.5 Z" fill="#3767a6"/></svg>
<div class="b" style="left:840px;top:535px;width:7px;height:19px;background:#6e6e6e"></div>
<div class="b" style="left:850px;top:536px;width:38px;height:17px;background:#cfcfcf"></div>
<div class="b" style="left:850px;top:539px;width:35px;height:12px;background:#838383"></div>
<div class="t" style="left:898.80px;top:535.0px;font-size:12.0px;line-height:16px;color:#222;font-weight:normal;letter-spacing:-0.360px;">No</div>
<div class="b" style="left:645px;top:398px;width:482px;height:42px;border:4px solid #ec2ba1;box-sizing:border-box"></div>
<div class="b" style="left:638px;top:583px;width:490px;height:5px;background:#dcdcdc"></div>
<div class="b" style="left:638px;top:588px;width:490px;height:32px;background:#fff"></div>
<div class="t" style="left:666.50px;top:596.0px;font-size:14.0px;line-height:18px;color:#3b5d8e;font-weight:normal;letter-spacing:1.124px;-webkit-text-stroke:0.55px #3b5d8e">Basic Information</div>
<svg class="b" style="left:1098px;top:595.4px" width="11" height="18" viewBox="0 0 11 18"><path d="M1.5 1.5 L9 9 L1.5 16.5" stroke="#36598a" stroke-width="2" fill="none"/></svg>
<div class="b" style="left:638px;top:631px;width:490px;height:5px;background:#dcdcdc"></div>
<div class="b" style="left:638px;top:636px;width:490px;height:32px;background:#fff"></div>
<div class="t" style="left:666.50px;top:643.4px;font-size:14.0px;line-height:18px;color:#3b5d8e;font-weight:normal;letter-spacing:1.360px;-webkit-text-stroke:0.55px #3b5d8e">Job Information</div>
<svg class="b" style="left:1098px;top:642.8px" width="11" height="18" viewBox="0 0 11 18"><path d="M1.5 1.5 L9 9 L1.5 16.5" stroke="#36598a" stroke-width="2" fill="none"/></svg>
<div class="b" style="left:638px;top:678px;width:490px;height:5px;background:#dcdcdc"></div>
<div class="b" style="left:638px;top:683px;width:490px;height:32px;background:#fff"></div>
<div class="t" style="left:666.50px;top:690.7px;font-size:14.0px;line-height:18px;color:#3b5d8e;font-weight:normal;letter-spacing:1.531px;-webkit-text-stroke:0.55px #3b5d8e">More Information</div>
<svg class="b" style="left:1098px;top:690.1px" width="11" height="18" viewBox="0 0 11 18"><path d="M1.5 1.5 L9 9 L1.5 16.5" stroke="#36598a" stroke-width="2" fill="none"/></svg>
<div class="b" style="left:795px;top:895px;width:90px;height:21px;background:#e4e4e4;border:1px solid #adadad;box-sizing:border-box"></div>
<div class="t" style="left:826.50px;top:898.0px;font-size:12.0px;line-height:16px;color:#222;font-weight:normal;letter-spacing:-0.955px;">Reset</div>
<div class="b" style="left:904px;top:895px;width:90px;height:21px;background:#fff;border:1px solid #ececec;box-sizing:border-box"></div>
<div class="t" style="left:934.00px;top:898.0px;font-size:12.0px;line-height:16px;color:#a0a0a0;font-weight:normal;letter-spacing:0.000px;">Apply</div>
<div class="b" style="left:1013px;top:895px;width:90px;height:21px;background:#e4e4e4;border:1px solid #adadad;box-sizing:border-box"></div>
<div class="t" style="left:1040.50px;top:898.0px;font-size:12.0px;line-height:16px;color:#222;font-weight:normal;letter-spacing:-0.464px;">Cancel</div>
<svg class="b" style="left:500px;top:420px" width="160" height="200" viewBox="0 0 160 200"><defs><filter id="sh" x="-20%" y="-20%" width="140%" height="140%"><feDropShadow dx="1" dy="1" stdDeviation="1.2" flood-color="#000" flood-opacity="0.35"/></filter></defs><g filter="url(#sh)"><path d="M145 19 L42 167" stroke="#ed2fa2" stroke-width="6" fill="none" stroke-linecap="round"/><path d="M30.6 182.7 L29.5 156 L53.5 173 Z" fill="#ed2fa2" stroke="#ed2fa2" stroke-width="1.5" stroke-linejoin="round"/></g></svg>
</body></html>
